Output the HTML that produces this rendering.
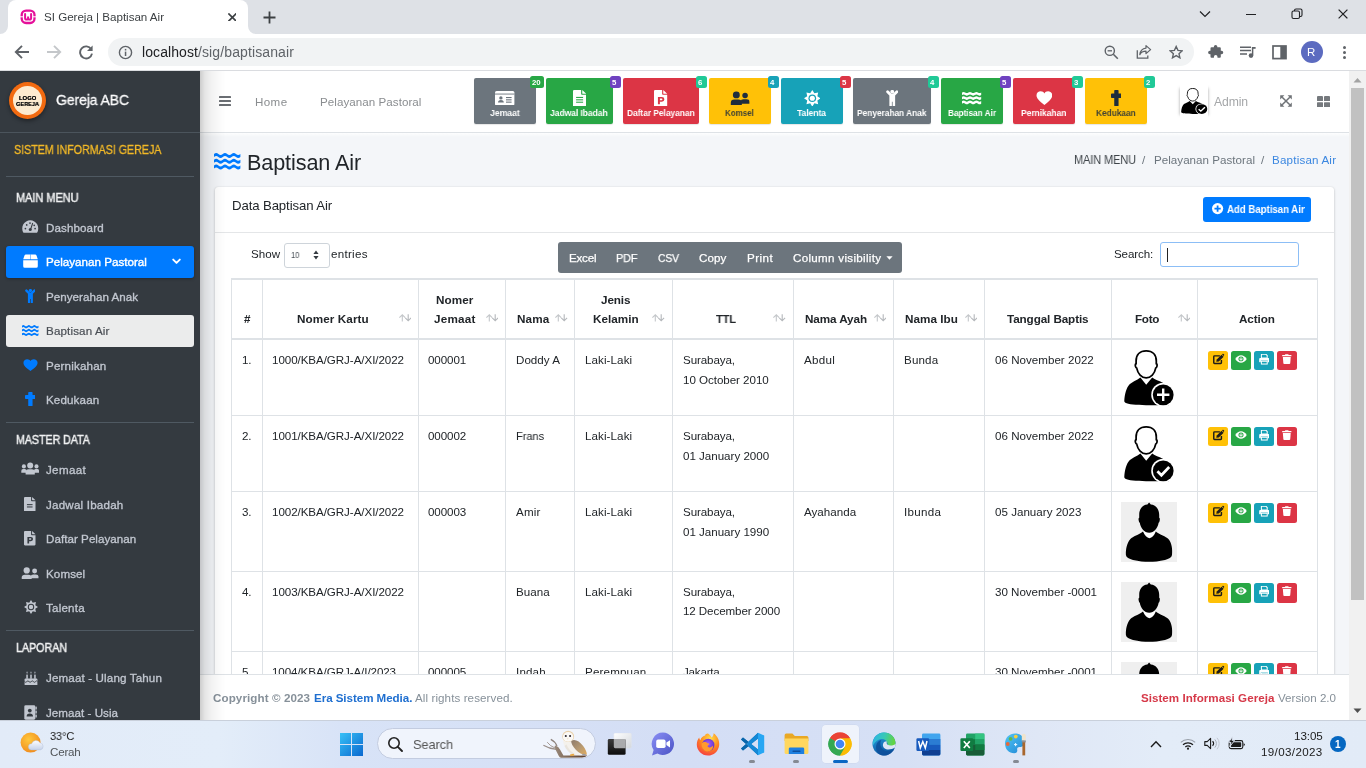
<!DOCTYPE html>
<html lang="en"><head><meta charset="utf-8"><title>SI Gereja | Baptisan Air</title>
<style>
html,body{margin:0;padding:0}
body{width:1366px;height:768px;overflow:hidden;position:relative;background:#fff;font-family:"Liberation Sans",sans-serif}
.t{position:absolute;white-space:pre;display:block;will-change:transform}
</style></head>
<body>
<div style="position:absolute;left:0px;top:0px;width:1366px;height:34px;background:#dee1e6;"></div>
<div style="position:absolute;left:8px;top:0;width:240px;height:34px;background:#fff;border-radius:8px 8px 0 0"></div>
<svg style="position:absolute;left:0px;top:26px;" width="8" height="8" viewBox="0 0 8 8" preserveAspectRatio="none"><path d="M8 8H0A8 8 0 0 0 8 0Z" fill="#fff"/></svg>
<svg style="position:absolute;left:248px;top:26px;" width="8" height="8" viewBox="0 0 8 8" preserveAspectRatio="none"><path d="M0 8H8A8 8 0 0 1 0 0Z" fill="#fff"/></svg>
<div style="position:absolute;left:0px;top:34px;width:1366px;height:36px;background:#fff;"></div>
<div style="position:absolute;left:0px;top:70px;width:1366px;height:1px;background:#dadce0;"></div>
<svg style="position:absolute;left:19px;top:8px;" width="18" height="18" viewBox="0 0 18 18" preserveAspectRatio="none"><rect x="2.7" y="2.6" width="12.8" height="12.4" rx="4.4" fill="#fff" stroke="#e5109a" stroke-width="2.3"/><rect x="1" y="8.3" width="3.4" height="1" fill="#fff"/><rect x="13.8" y="8.3" width="3.4" height="1" fill="#fff"/><path d="M6.1 6V10.2A1.4 1.4 0 0 0 7.5 11.6H7.7A1.4 1.4 0 0 0 9.1 10.2V8.4V10.2A1.4 1.4 0 0 0 10.5 11.6H10.7A1.4 1.4 0 0 0 12.1 10.2V6" fill="none" stroke="#e5109a" stroke-width="2" stroke-linecap="round"/></svg>
<span class="t" style="left:43.60px;top:11.00px;font-size:11.6px;line-height:11.6px;color:#3c4043;letter-spacing:-0.012px;">SI Gereja | Baptisan Air</span>
<svg style="position:absolute;left:227.6px;top:12.6px;" width="8.8" height="8.8" viewBox="0 0 8.8 8.8" preserveAspectRatio="none"><path d="M1 1L7.800000000000001 7.800000000000001M7.800000000000001 1L1 7.800000000000001" stroke="#3c4043" stroke-width="1.7" stroke-linecap="square"/></svg>
<svg style="position:absolute;left:263px;top:10.5px;" width="13" height="13" viewBox="0 0 13 13" preserveAspectRatio="none"><path d="M6.5 0.5V12.5M0.5 6.5H12.5" stroke="#3c4043" stroke-width="1.8"/></svg>
<svg style="position:absolute;left:1199px;top:10px;" width="12" height="8" viewBox="0 0 12 8" preserveAspectRatio="none"><path d="M1 1.5L6 6.5L11 1.5" fill="none" stroke="#202124" stroke-width="1.2"/></svg>
<div style="position:absolute;left:1246px;top:14px;width:10px;height:1px;background:#202124;"></div>
<svg style="position:absolute;left:1291px;top:8px;" width="12" height="12" viewBox="0 0 12 12" preserveAspectRatio="none"><rect x="1" y="3" width="7.5" height="7.5" rx="1.5" fill="none" stroke="#202124" stroke-width="1.1"/><path d="M3.5 3V2.5A1.5 1.5 0 0 1 5 1H9.5A1.5 1.5 0 0 1 11 2.5V7A1.5 1.5 0 0 1 9.5 8.5H9" fill="none" stroke="#202124" stroke-width="1.1"/></svg>
<svg style="position:absolute;left:1338px;top:9px;" width="10" height="10" viewBox="0 0 10 10" preserveAspectRatio="none"><path d="M1 1L9 9M9 1L1 9" stroke="#202124" stroke-width="1.1" stroke-linecap="square"/></svg>
<svg style="position:absolute;left:14px;top:44px;" width="16" height="16" viewBox="0 0 16 16" preserveAspectRatio="none"><g ><path d="M15 8H2.2M8 1.8L1.8 8L8 14.2" fill="none" stroke="#5f6368" stroke-width="1.9" stroke-linejoin="miter"/></g></svg>
<svg style="position:absolute;left:46px;top:44px;" width="16" height="16" viewBox="0 0 16 16" preserveAspectRatio="none"><g transform="translate(16,0) scale(-1,1)"><path d="M15 8H2.2M8 1.8L1.8 8L8 14.2" fill="none" stroke="#c4c7ca" stroke-width="1.9" stroke-linejoin="miter"/></g></svg>
<svg style="position:absolute;left:78px;top:44px;" width="16" height="16" viewBox="0 0 16 16" preserveAspectRatio="none"><path d="M13.2 5.2A6 6 0 1 0 14 9.6" fill="none" stroke="#5f6368" stroke-width="1.9"/><path d="M14.6 1.4V7H9Z" fill="#5f6368"/></svg>
<div style="position:absolute;left:108px;top:38px;width:1086px;height:28px;background:#f1f3f4;border-radius:14px"></div>
<svg style="position:absolute;left:118px;top:45px;" width="15" height="15" viewBox="0 0 15 15" preserveAspectRatio="none"><circle cx="7.5" cy="7.5" r="6.1" fill="none" stroke="#5f6368" stroke-width="1.4"/><rect x="6.8" y="6.6" width="1.5" height="4.4" fill="#5f6368"/><rect x="6.8" y="3.9" width="1.5" height="1.6" fill="#5f6368"/></svg>
<span class="t" style="left:141.60px;top:45.00px;font-size:14px;line-height:14px;color:#202124;letter-spacing:0.082px;">localhost</span>
<span class="t" style="left:197.90px;top:45.00px;font-size:14px;line-height:14px;color:#5f6368;letter-spacing:0.114px;">/sig/baptisanair</span>
<svg style="position:absolute;left:1104px;top:45px;" width="15" height="15" viewBox="0 0 15 15" preserveAspectRatio="none"><circle cx="5.8" cy="5.8" r="4.6" fill="none" stroke="#5f6368" stroke-width="1.4"/><path d="M9.3 9.3L13.8 13.8" stroke="#5f6368" stroke-width="1.6"/><path d="M3.6 5.8H8" stroke="#5f6368" stroke-width="1.3"/></svg>
<svg style="position:absolute;left:1136px;top:44px;" width="16" height="16" viewBox="0 0 16 16" preserveAspectRatio="none"><path d="M1.3 6.2V14.2H11.8V11.6" fill="none" stroke="#5f6368" stroke-width="1.3"/><path d="M10 1.6L14.6 5.6L10 9.6V7.2C7 7.2 5 8.2 3.8 10.6C4.2 7 6.2 4.6 10 4.1Z" fill="none" stroke="#5f6368" stroke-width="1.25" stroke-linejoin="round"/></svg>
<svg style="position:absolute;left:1168.8px;top:44.9px;" width="14.4" height="14.4" viewBox="0 0 16 16" preserveAspectRatio="none"><path d="M8 1.6L9.95 6L14.7 6.45L11.1 9.6L12.15 14.3L8 11.85L3.85 14.3L4.9 9.6L1.3 6.45L6.05 6Z" fill="none" stroke="#5f6368" stroke-width="1.5" stroke-linejoin="miter"/></svg>
<svg style="position:absolute;left:1208px;top:44px;" width="16" height="16" viewBox="0 0 16 16" preserveAspectRatio="none"><path d="M6.3 2.9A1.7 1.7 0 0 1 9.7 2.9V3.6H12.2A1 1 0 0 1 13.2 4.6V7H13.9A1.75 1.75 0 0 1 13.9 10.5H13.2V13A1 1 0 0 1 12.2 14H9.9V13.2A1.8 1.8 0 0 0 6.3 13.2V14H3.9A1 1 0 0 1 2.9 13V10.6H2.3A1.8 1.8 0 0 1 2.3 7H2.9V4.6A1 1 0 0 1 3.9 3.6H6.3Z" fill="#5f6368" transform="translate(-0.4,-0.3)"/></svg>
<svg style="position:absolute;left:1239px;top:44px;" width="18" height="16" viewBox="0 0 18 16" preserveAspectRatio="none"><path d="M1 3.2H12M1 6.6H12M1 10H8" stroke="#5f6368" stroke-width="1.5"/><path d="M13.6 3V11.2" stroke="#5f6368" stroke-width="1.5"/><path d="M13 3H16.6V4.8H13Z" fill="#5f6368"/><circle cx="12" cy="11.6" r="2.3" fill="#5f6368"/></svg>
<svg style="position:absolute;left:1272px;top:44.5px;" width="15" height="15" viewBox="0 0 15 15" preserveAspectRatio="none"><rect x="1" y="1" width="13" height="12.6" fill="none" stroke="#5f6368" stroke-width="1.7"/><rect x="8.3" y="1" width="5.7" height="12.6" fill="#5f6368"/></svg>
<div style="position:absolute;left:1301px;top:41px;width:22px;height:22px;border-radius:11px;background:#5c6bc0"></div>
<span class="t" style="left:1307.44px;top:47.00px;font-size:11.5px;line-height:11.5px;color:#fff;">R</span>
<div style="position:absolute;left:1343px;top:45.5px;width:3px;height:3px;border-radius:2px;background:#5f6368"></div>
<div style="position:absolute;left:1343px;top:50.5px;width:3px;height:3px;border-radius:2px;background:#5f6368"></div>
<div style="position:absolute;left:1343px;top:55.5px;width:3px;height:3px;border-radius:2px;background:#5f6368"></div>
<div style="position:absolute;left:200px;top:133px;width:1149px;height:541px;background:#f4f6f9;"></div>
<svg style="position:absolute;left:213.6px;top:153.2px;overflow:visible;" width="26.4" height="16.6" viewBox="0 0 26.4 16.6" preserveAspectRatio="none"><path d="M0 0.99 Q2.20 -0.99 4.40 0.99 T8.80 0.99 Q11.00 -0.99 13.20 0.99 T17.60 0.99 Q19.80 -0.99 22.00 0.99 T26.40 0.99 L26.40 4.00 Q24.20 5.98 22.00 4.00 T17.60 4.00 Q15.40 5.98 13.20 4.00 T8.80 4.00 Q6.60 5.98 4.40 4.00 T0.00 4.00Z" fill="#007bff"/><path d="M0 6.79 Q2.20 4.82 4.40 6.79 T8.80 6.79 Q11.00 4.82 13.20 6.79 T17.60 6.79 Q19.80 4.82 22.00 6.79 T26.40 6.79 L26.40 9.81 Q24.20 11.78 22.00 9.81 T17.60 9.81 Q15.40 11.78 13.20 9.81 T8.80 9.81 Q6.60 11.78 4.40 9.81 T0.00 9.81Z" fill="#007bff"/><path d="M0 12.60 Q2.20 10.62 4.40 12.60 T8.80 12.60 Q11.00 10.62 13.20 12.60 T17.60 12.60 Q19.80 10.62 22.00 12.60 T26.40 12.60 L26.40 15.61 Q24.20 17.59 22.00 15.61 T17.60 15.61 Q15.40 17.59 13.20 15.61 T8.80 15.61 Q6.60 17.59 4.40 15.61 T0.00 15.61Z" fill="#007bff"/></svg>
<span class="t" style="left:246.60px;top:152.00px;font-size:21.6px;line-height:21.6px;color:#212529;letter-spacing:-0.103px;">Baptisan Air</span>
<span class="t" style="left:1073.60px;top:155.00px;font-size:11.9px;line-height:11.9px;color:#3d4348;letter-spacing:-0.113px;transform:scaleX(0.9250);transform-origin:0 0;">MAIN MENU</span>
<span class="t" style="left:1142.30px;top:154.00px;font-size:11.6px;line-height:11.6px;color:#6c757d;">/</span>
<span class="t" style="left:1153.60px;top:154.00px;font-size:11.6px;line-height:11.6px;color:#6c757d;letter-spacing:0.025px;">Pelayanan Pastoral</span>
<span class="t" style="left:1260.60px;top:154.00px;font-size:11.6px;line-height:11.6px;color:#6c757d;">/</span>
<span class="t" style="left:1272.40px;top:154.00px;font-size:11.6px;line-height:11.6px;color:#3b87e0;letter-spacing:0.194px;">Baptisan Air</span>
<div style="position:absolute;left:215px;top:187px;width:1119px;height:540px;background:#fff;border-radius:3px;box-shadow:0 0 1px rgba(0,0,0,.125),0 1px 3px rgba(0,0,0,.2)"></div>
<div style="position:absolute;left:215px;top:232px;width:1119px;height:1px;background:#e4e6e8;"></div>
<span class="t" style="left:231.60px;top:199.00px;font-size:13.2px;line-height:13.2px;color:#212529;letter-spacing:-0.112px;">Data Baptisan Air</span>
<div style="position:absolute;left:1203px;top:197px;width:108px;height:25px;border-radius:3px;background:#007bff"></div>
<svg style="position:absolute;left:1212.4px;top:203.4px;" width="11.2" height="11.2" viewBox="0 0 100 100" preserveAspectRatio="none"><circle cx="50" cy="50" r="50" fill="#fff"/><path d="M42 22H58V42H78V58H58V78H42V58H22V42H42Z" fill="#007bff"/></svg>
<span class="t" style="left:1226.60px;top:205.00px;font-size:10.3px;line-height:10.3px;color:#fff;font-weight:700;letter-spacing:-0.078px;transform:scaleX(0.9462);transform-origin:0 0;font-stretch:condensed;">Add Baptisan Air</span>
<span class="t" style="left:250.60px;top:248.00px;font-size:11.6px;line-height:11.6px;color:#212529;">Show</span>
<div style="position:absolute;left:283.5px;top:242.5px;width:44px;height:23px;border:1px solid #ced4da;border-radius:3px;background:#fff"></div>
<span class="t" style="left:290.60px;top:251.00px;font-size:8.4px;line-height:8.4px;color:#495057;letter-spacing:-0.070px;transform:scaleX(0.9142);transform-origin:0 0;">10</span>
<svg style="position:absolute;left:313px;top:249.6px;" width="6" height="10" viewBox="0 0 6 10" preserveAspectRatio="none"><path d="M0.4 4L3 0.6L5.6 4Z M0.4 6L3 9.4L5.6 6Z" fill="#343a40"/></svg>
<span class="t" style="left:331.20px;top:248.00px;font-size:11.6px;line-height:11.6px;color:#212529;letter-spacing:0.284px;">entries</span>
<div style="position:absolute;left:558px;top:242px;width:344px;height:30.5px;border-radius:3px;background:#6c757d"></div>
<span class="t" style="left:568.80px;top:252.00px;font-size:11.6px;line-height:11.6px;color:#fff;letter-spacing:-0.212px;-webkit-text-stroke:.25px #fff;">Excel</span>
<span class="t" style="left:616.10px;top:252.00px;font-size:11.6px;line-height:11.6px;color:#fff;letter-spacing:-0.116px;transform:scaleX(0.9413);transform-origin:0 0;-webkit-text-stroke:.25px #fff;">PDF</span>
<span class="t" style="left:657.80px;top:252.00px;font-size:11.6px;line-height:11.6px;color:#fff;letter-spacing:-0.119px;transform:scaleX(0.8941);transform-origin:0 0;-webkit-text-stroke:.25px #fff;">CSV</span>
<span class="t" style="left:698.60px;top:252.00px;font-size:11.6px;line-height:11.6px;color:#fff;letter-spacing:0.105px;-webkit-text-stroke:.25px #fff;">Copy</span>
<span class="t" style="left:746.60px;top:252.00px;font-size:11.6px;line-height:11.6px;color:#fff;letter-spacing:0.471px;-webkit-text-stroke:.25px #fff;">Print</span>
<span class="t" style="left:793.30px;top:252.00px;font-size:11.6px;line-height:11.6px;color:#fff;letter-spacing:0.305px;-webkit-text-stroke:.25px #fff;">Column visibility</span>
<svg style="position:absolute;left:886px;top:255.5px;" width="7" height="4" viewBox="0 0 7 4" preserveAspectRatio="none"><path d="M0.4 0.3H6.6L3.5 3.7Z" fill="#fff"/></svg>
<span class="t" style="left:1114.30px;top:248.00px;font-size:11.6px;line-height:11.6px;color:#212529;letter-spacing:-0.110px;">Search:</span>
<div style="position:absolute;left:1160px;top:242px;width:137px;height:23px;border:1px solid #8cbef6;border-radius:3px;background:#fff"></div>
<div style="position:absolute;left:1167px;top:248px;width:1px;height:14px;background:#222;"></div>
<div style="position:absolute;left:231.8px;top:278px;width:1085.2px;height:2px;background:#dee2e6;"></div>
<div style="position:absolute;left:231.8px;top:338px;width:1085.2px;height:2px;background:#dee2e6;"></div>
<div style="position:absolute;left:231.8px;top:415px;width:1085.2px;height:1px;background:#dee2e6;"></div>
<div style="position:absolute;left:231.8px;top:491px;width:1085.2px;height:1px;background:#dee2e6;"></div>
<div style="position:absolute;left:231.8px;top:571px;width:1085.2px;height:1px;background:#dee2e6;"></div>
<div style="position:absolute;left:231.8px;top:651px;width:1085.2px;height:1px;background:#dee2e6;"></div>
<div style="position:absolute;left:231.3px;top:278px;width:1px;height:396px;background:#dee2e6;"></div>
<div style="position:absolute;left:262.0px;top:278px;width:1px;height:396px;background:#dee2e6;"></div>
<div style="position:absolute;left:418.0px;top:278px;width:1px;height:396px;background:#dee2e6;"></div>
<div style="position:absolute;left:505.0px;top:278px;width:1px;height:396px;background:#dee2e6;"></div>
<div style="position:absolute;left:574.0px;top:278px;width:1px;height:396px;background:#dee2e6;"></div>
<div style="position:absolute;left:672.0px;top:278px;width:1px;height:396px;background:#dee2e6;"></div>
<div style="position:absolute;left:793.0px;top:278px;width:1px;height:396px;background:#dee2e6;"></div>
<div style="position:absolute;left:893.0px;top:278px;width:1px;height:396px;background:#dee2e6;"></div>
<div style="position:absolute;left:984.0px;top:278px;width:1px;height:396px;background:#dee2e6;"></div>
<div style="position:absolute;left:1111.0px;top:278px;width:1px;height:396px;background:#dee2e6;"></div>
<div style="position:absolute;left:1197.0px;top:278px;width:1px;height:396px;background:#dee2e6;"></div>
<div style="position:absolute;left:1316.5px;top:278px;width:1px;height:396px;background:#dee2e6;"></div>
<span class="t" style="left:243.60px;top:313.00px;font-size:11.7px;line-height:11.7px;color:#212529;font-weight:700;letter-spacing:-0.116px;">#</span>
<span class="t" style="left:297.20px;top:313.00px;font-size:11.7px;line-height:11.7px;color:#212529;font-weight:700;letter-spacing:0.091px;">Nomer Kartu</span>
<span class="t" style="left:436.20px;top:294.00px;font-size:11.7px;line-height:11.7px;color:#212529;font-weight:700;letter-spacing:0.074px;">Nomer</span>
<span class="t" style="left:434.00px;top:313.00px;font-size:11.7px;line-height:11.7px;color:#212529;font-weight:700;letter-spacing:0.217px;">Jemaat</span>
<span class="t" style="left:516.80px;top:313.00px;font-size:11.7px;line-height:11.7px;color:#212529;font-weight:700;letter-spacing:0.114px;">Nama</span>
<span class="t" style="left:601.40px;top:294.00px;font-size:11.7px;line-height:11.7px;color:#212529;font-weight:700;letter-spacing:-0.098px;">Jenis</span>
<span class="t" style="left:593.30px;top:313.00px;font-size:11.7px;line-height:11.7px;color:#212529;font-weight:700;letter-spacing:0.019px;">Kelamin</span>
<span class="t" style="left:715.60px;top:313.00px;font-size:11.7px;line-height:11.7px;color:#212529;font-weight:700;letter-spacing:-0.107px;transform:scaleX(0.9478);transform-origin:0 0;">TTL</span>
<span class="t" style="left:805.30px;top:313.00px;font-size:11.7px;line-height:11.7px;color:#212529;font-weight:700;letter-spacing:-0.089px;">Nama Ayah</span>
<span class="t" style="left:905.10px;top:313.00px;font-size:11.7px;line-height:11.7px;color:#212529;font-weight:700;letter-spacing:0.049px;">Nama Ibu</span>
<span class="t" style="left:1007.00px;top:313.00px;font-size:11.7px;line-height:11.7px;color:#212529;font-weight:700;letter-spacing:-0.100px;">Tanggal Baptis</span>
<span class="t" style="left:1135.10px;top:313.00px;font-size:11.7px;line-height:11.7px;color:#212529;font-weight:700;letter-spacing:-0.278px;">Foto</span>
<span class="t" style="left:1239.10px;top:313.00px;font-size:11.7px;line-height:11.7px;color:#212529;font-weight:700;letter-spacing:-0.093px;">Action</span>
<svg style="position:absolute;left:398.6px;top:314.0px;" width="12.6" height="7.6" viewBox="0 0 12.6 7.6" preserveAspectRatio="none"><path d="M3.3 7.4V1.2M0.4 3.7L3.3 0.8L6.2 3.7" fill="none" stroke="#c4c7ca" stroke-width="1.1"/><path d="M9.2 0.2V6.4M6.3 3.9L9.2 6.8L12.1 3.9" fill="none" stroke="#b4b7bb" stroke-width="1.1"/></svg>
<svg style="position:absolute;left:485.6px;top:314.0px;" width="12.6" height="7.6" viewBox="0 0 12.6 7.6" preserveAspectRatio="none"><path d="M3.3 7.4V1.2M0.4 3.7L3.3 0.8L6.2 3.7" fill="none" stroke="#c4c7ca" stroke-width="1.1"/><path d="M9.2 0.2V6.4M6.3 3.9L9.2 6.8L12.1 3.9" fill="none" stroke="#b4b7bb" stroke-width="1.1"/></svg>
<svg style="position:absolute;left:555.2px;top:314.0px;" width="12.6" height="7.6" viewBox="0 0 12.6 7.6" preserveAspectRatio="none"><path d="M3.3 7.4V1.2M0.4 3.7L3.3 0.8L6.2 3.7" fill="none" stroke="#c4c7ca" stroke-width="1.1"/><path d="M9.2 0.2V6.4M6.3 3.9L9.2 6.8L12.1 3.9" fill="none" stroke="#b4b7bb" stroke-width="1.1"/></svg>
<svg style="position:absolute;left:652.2px;top:314.0px;" width="12.6" height="7.6" viewBox="0 0 12.6 7.6" preserveAspectRatio="none"><path d="M3.3 7.4V1.2M0.4 3.7L3.3 0.8L6.2 3.7" fill="none" stroke="#c4c7ca" stroke-width="1.1"/><path d="M9.2 0.2V6.4M6.3 3.9L9.2 6.8L12.1 3.9" fill="none" stroke="#b4b7bb" stroke-width="1.1"/></svg>
<svg style="position:absolute;left:773.2px;top:314.0px;" width="12.6" height="7.6" viewBox="0 0 12.6 7.6" preserveAspectRatio="none"><path d="M3.3 7.4V1.2M0.4 3.7L3.3 0.8L6.2 3.7" fill="none" stroke="#c4c7ca" stroke-width="1.1"/><path d="M9.2 0.2V6.4M6.3 3.9L9.2 6.8L12.1 3.9" fill="none" stroke="#b4b7bb" stroke-width="1.1"/></svg>
<svg style="position:absolute;left:873.6px;top:314.0px;" width="12.6" height="7.6" viewBox="0 0 12.6 7.6" preserveAspectRatio="none"><path d="M3.3 7.4V1.2M0.4 3.7L3.3 0.8L6.2 3.7" fill="none" stroke="#c4c7ca" stroke-width="1.1"/><path d="M9.2 0.2V6.4M6.3 3.9L9.2 6.8L12.1 3.9" fill="none" stroke="#b4b7bb" stroke-width="1.1"/></svg>
<svg style="position:absolute;left:964.6px;top:314.0px;" width="12.6" height="7.6" viewBox="0 0 12.6 7.6" preserveAspectRatio="none"><path d="M3.3 7.4V1.2M0.4 3.7L3.3 0.8L6.2 3.7" fill="none" stroke="#c4c7ca" stroke-width="1.1"/><path d="M9.2 0.2V6.4M6.3 3.9L9.2 6.8L12.1 3.9" fill="none" stroke="#b4b7bb" stroke-width="1.1"/></svg>
<svg style="position:absolute;left:1177.5px;top:314.0px;" width="12.6" height="7.6" viewBox="0 0 12.6 7.6" preserveAspectRatio="none"><path d="M3.3 7.4V1.2M0.4 3.7L3.3 0.8L6.2 3.7" fill="none" stroke="#c4c7ca" stroke-width="1.1"/><path d="M9.2 0.2V6.4M6.3 3.9L9.2 6.8L12.1 3.9" fill="none" stroke="#b4b7bb" stroke-width="1.1"/></svg>
<div style="position:absolute;left:200px;top:133px;width:1149px;height:541px;overflow:hidden"><div style="position:absolute;left:-200px;top:-133px">
<span class="t" style="left:241.60px;top:354.00px;font-size:11.6px;line-height:11.6px;color:#212529;letter-spacing:-0.086px;">1.</span>
<span class="t" style="left:272.40px;top:354.00px;font-size:11.6px;line-height:11.6px;color:#212529;letter-spacing:-0.064px;">1000/KBA/GRJ-A/XI/2022</span>
<span class="t" style="left:428.40px;top:354.00px;font-size:11.6px;line-height:11.6px;color:#212529;letter-spacing:-0.081px;">000001</span>
<span class="t" style="left:516.10px;top:354.00px;font-size:11.6px;line-height:11.6px;color:#212529;letter-spacing:0.025px;">Doddy A</span>
<span class="t" style="left:585.30px;top:354.00px;font-size:11.6px;line-height:11.6px;color:#212529;letter-spacing:0.088px;">Laki-Laki</span>
<span class="t" style="left:683.00px;top:354.00px;font-size:11.6px;line-height:11.6px;color:#212529;letter-spacing:-0.095px;">Surabaya,</span>
<span class="t" style="left:683.00px;top:374.00px;font-size:11.6px;line-height:11.6px;color:#212529;letter-spacing:-0.045px;">10 October 2010</span>
<span class="t" style="left:803.60px;top:354.00px;font-size:11.6px;line-height:11.6px;color:#212529;letter-spacing:0.309px;">Abdul</span>
<span class="t" style="left:903.90px;top:354.00px;font-size:11.6px;line-height:11.6px;color:#212529;letter-spacing:0.154px;">Bunda</span>
<span class="t" style="left:994.60px;top:354.00px;font-size:11.6px;line-height:11.6px;color:#212529;letter-spacing:0.012px;">06 November 2022</span>
<svg style="position:absolute;left:1124px;top:350px;" width="51" height="57" viewBox="0 0 51 57" preserveAspectRatio="none"><path d="M0.3 50.6C0.7 44 2.4 37.6 5.6 34.2C8 31.8 12.8 30.4 16.4 27.4L22.2 34.8L28.2 27.4C31 29.6 35 30.8 38.4 32.4C42 34 44 38 45 42V55.2H22C12 55.2 4 54.2 1.4 52.8C0.5 52.2 0.2 51.6 0.3 50.6Z" fill="#000"/><path d="M22.2 0.9C28.6 0.9 32.3 5 32.3 11V13.7C33.1 13.9 33.3 15 32.9 16.4C32.7 17.4 32.3 18 31.7 18.2C30.7 23.6 26.8 27.8 22.2 27.8C17.6 27.8 13.7 23.6 12.7 18.2C12.1 18 11.7 17.4 11.5 16.4C11.1 15 11.3 13.9 12.1 13.7V11C12.1 5 15.8 0.9 22.2 0.9Z" fill="#fff" stroke="#000" stroke-width="1.75"/><circle cx="39.2" cy="44.8" r="12" fill="#fff"/><circle cx="39.2" cy="44.8" r="10.4" fill="#000"/><path d="M39.2 38.6V51M33 44.8H45.4" stroke="#fff" stroke-width="2.4"/></svg>
<div style="position:absolute;left:1208px;top:351px;width:20px;height:19px;border-radius:2.5px;background:#ffc107"></div>
<svg style="position:absolute;left:1212.5px;top:354.3px;overflow:visible;" width="11.0" height="10.0" viewBox="0 0 11.5 10.6" preserveAspectRatio="none"><path d="M7.2 2H1.6Q0.8 2 0.8 2.8V9.2Q0.8 10 1.6 10H8Q8.8 10 8.8 9.2V6.4" fill="none" stroke="#1d1c1a" stroke-width="1.5"/><path d="M3.4 8.1L3.9 5.7L8.9 0.7L11.1 2.9L6.1 7.9Z" fill="#1d1c1a"/><path d="M9.5 0.5L10.2 -0.2Q10.6 -0.5 11 -0.1L11.6 0.5Q12 0.9 11.6 1.3L11 2Z" fill="#1d1c1a"/></svg>
<div style="position:absolute;left:1231px;top:351px;width:20px;height:19px;border-radius:2.5px;background:#28a745"></div>
<svg style="position:absolute;left:1235.0px;top:355.3px;" width="12" height="8" viewBox="0 0 13 9" preserveAspectRatio="none"><path d="M0.3 4.5Q3 0.3 6.5 0.3Q10 0.3 12.7 4.5Q10 8.7 6.5 8.7Q3 8.7 0.3 4.5Z" fill="#fff"/><circle cx="6.5" cy="4.4" r="2.75" fill="#28a745"/><circle cx="6.5" cy="4.4" r="1.75" fill="#fff" opacity=".82"/><path d="M6.5 2.6V4.4" stroke="#28a745" stroke-width=".8"/></svg>
<div style="position:absolute;left:1254px;top:351px;width:20px;height:19px;border-radius:2.5px;background:#17a2b8"></div>
<svg style="position:absolute;left:1258.6px;top:354.2px;" width="10.6" height="10.6" viewBox="0 0 11.6 11.4" preserveAspectRatio="none"><path d="M2.6 0.3H7.6L9 1.7V4.2H2.6Z" fill="none" stroke="#fff" stroke-width="1.1"/><path d="M1.3 4.4H10.3Q11.4 4.4 11.4 5.5V8.4Q11.4 8.9 10.9 8.9H9.6V7H2V8.9H0.7Q0.2 8.9 0.2 8.4V5.5Q0.2 4.4 1.3 4.4Z" fill="#fff"/><rect x="2.6" y="7.8" width="6.4" height="3" fill="none" stroke="#fff" stroke-width="1.1"/></svg>
<div style="position:absolute;left:1277px;top:351px;width:20px;height:19px;border-radius:2.5px;background:#dc3545"></div>
<svg style="position:absolute;left:1282.2px;top:354.2px;" width="9.6" height="10.4" viewBox="0 0 10 11.6" preserveAspectRatio="none"><path d="M0.2 1.2H3L3.5 0.3H6.5L7 1.2H9.8V2.5H0.2Z" fill="#fff"/><path d="M0.9 3.3H9.1L8.6 10.4Q8.5 11.3 7.6 11.3H2.4Q1.5 11.3 1.4 10.4Z" fill="#fff"/></svg>
<span class="t" style="left:241.60px;top:430.00px;font-size:11.6px;line-height:11.6px;color:#212529;letter-spacing:-0.086px;">2.</span>
<span class="t" style="left:272.40px;top:430.00px;font-size:11.6px;line-height:11.6px;color:#212529;letter-spacing:-0.064px;">1001/KBA/GRJ-A/XI/2022</span>
<span class="t" style="left:428.40px;top:430.00px;font-size:11.6px;line-height:11.6px;color:#212529;letter-spacing:-0.081px;">000002</span>
<span class="t" style="left:516.10px;top:430.00px;font-size:11.6px;line-height:11.6px;color:#212529;letter-spacing:-0.089px;transform:scaleX(0.9625);transform-origin:0 0;">Frans</span>
<span class="t" style="left:585.30px;top:430.00px;font-size:11.6px;line-height:11.6px;color:#212529;letter-spacing:0.088px;">Laki-Laki</span>
<span class="t" style="left:683.00px;top:430.00px;font-size:11.6px;line-height:11.6px;color:#212529;letter-spacing:-0.095px;">Surabaya,</span>
<span class="t" style="left:683.00px;top:450.00px;font-size:11.6px;line-height:11.6px;color:#212529;letter-spacing:-0.019px;">01 January 2000</span>
<span class="t" style="left:994.60px;top:430.00px;font-size:11.6px;line-height:11.6px;color:#212529;letter-spacing:0.012px;">06 November 2022</span>
<svg style="position:absolute;left:1124px;top:426px;" width="51" height="57" viewBox="0 0 51 57" preserveAspectRatio="none"><path d="M0.3 50.6C0.7 44 2.4 37.6 5.6 34.2C8 31.8 12.8 30.4 16.4 27.4L22.2 34.8L28.2 27.4C31 29.6 35 30.8 38.4 32.4C42 34 44 38 45 42V55.2H22C12 55.2 4 54.2 1.4 52.8C0.5 52.2 0.2 51.6 0.3 50.6Z" fill="#000"/><path d="M22.2 0.9C28.6 0.9 32.3 5 32.3 11V13.7C33.1 13.9 33.3 15 32.9 16.4C32.7 17.4 32.3 18 31.7 18.2C30.7 23.6 26.8 27.8 22.2 27.8C17.6 27.8 13.7 23.6 12.7 18.2C12.1 18 11.7 17.4 11.5 16.4C11.1 15 11.3 13.9 12.1 13.7V11C12.1 5 15.8 0.9 22.2 0.9Z" fill="#fff" stroke="#000" stroke-width="1.75"/><circle cx="39.2" cy="44.8" r="12" fill="#fff"/><circle cx="39.2" cy="44.8" r="10.4" fill="#000"/><path d="M33.4 45.2L37.4 49.2L45.2 41" fill="none" stroke="#fff" stroke-width="2.7"/></svg>
<div style="position:absolute;left:1208px;top:427px;width:20px;height:19px;border-radius:2.5px;background:#ffc107"></div>
<svg style="position:absolute;left:1212.5px;top:430.3px;overflow:visible;" width="11.0" height="10.0" viewBox="0 0 11.5 10.6" preserveAspectRatio="none"><path d="M7.2 2H1.6Q0.8 2 0.8 2.8V9.2Q0.8 10 1.6 10H8Q8.8 10 8.8 9.2V6.4" fill="none" stroke="#1d1c1a" stroke-width="1.5"/><path d="M3.4 8.1L3.9 5.7L8.9 0.7L11.1 2.9L6.1 7.9Z" fill="#1d1c1a"/><path d="M9.5 0.5L10.2 -0.2Q10.6 -0.5 11 -0.1L11.6 0.5Q12 0.9 11.6 1.3L11 2Z" fill="#1d1c1a"/></svg>
<div style="position:absolute;left:1231px;top:427px;width:20px;height:19px;border-radius:2.5px;background:#28a745"></div>
<svg style="position:absolute;left:1235.0px;top:431.3px;" width="12" height="8" viewBox="0 0 13 9" preserveAspectRatio="none"><path d="M0.3 4.5Q3 0.3 6.5 0.3Q10 0.3 12.7 4.5Q10 8.7 6.5 8.7Q3 8.7 0.3 4.5Z" fill="#fff"/><circle cx="6.5" cy="4.4" r="2.75" fill="#28a745"/><circle cx="6.5" cy="4.4" r="1.75" fill="#fff" opacity=".82"/><path d="M6.5 2.6V4.4" stroke="#28a745" stroke-width=".8"/></svg>
<div style="position:absolute;left:1254px;top:427px;width:20px;height:19px;border-radius:2.5px;background:#17a2b8"></div>
<svg style="position:absolute;left:1258.6px;top:430.2px;" width="10.6" height="10.6" viewBox="0 0 11.6 11.4" preserveAspectRatio="none"><path d="M2.6 0.3H7.6L9 1.7V4.2H2.6Z" fill="none" stroke="#fff" stroke-width="1.1"/><path d="M1.3 4.4H10.3Q11.4 4.4 11.4 5.5V8.4Q11.4 8.9 10.9 8.9H9.6V7H2V8.9H0.7Q0.2 8.9 0.2 8.4V5.5Q0.2 4.4 1.3 4.4Z" fill="#fff"/><rect x="2.6" y="7.8" width="6.4" height="3" fill="none" stroke="#fff" stroke-width="1.1"/></svg>
<div style="position:absolute;left:1277px;top:427px;width:20px;height:19px;border-radius:2.5px;background:#dc3545"></div>
<svg style="position:absolute;left:1282.2px;top:430.2px;" width="9.6" height="10.4" viewBox="0 0 10 11.6" preserveAspectRatio="none"><path d="M0.2 1.2H3L3.5 0.3H6.5L7 1.2H9.8V2.5H0.2Z" fill="#fff"/><path d="M0.9 3.3H9.1L8.6 10.4Q8.5 11.3 7.6 11.3H2.4Q1.5 11.3 1.4 10.4Z" fill="#fff"/></svg>
<span class="t" style="left:241.60px;top:506.00px;font-size:11.6px;line-height:11.6px;color:#212529;letter-spacing:-0.086px;">3.</span>
<span class="t" style="left:272.40px;top:506.00px;font-size:11.6px;line-height:11.6px;color:#212529;letter-spacing:-0.064px;">1002/KBA/GRJ-A/XI/2022</span>
<span class="t" style="left:428.40px;top:506.00px;font-size:11.6px;line-height:11.6px;color:#212529;letter-spacing:-0.081px;">000003</span>
<span class="t" style="left:516.10px;top:506.00px;font-size:11.6px;line-height:11.6px;color:#212529;letter-spacing:0.193px;">Amir</span>
<span class="t" style="left:585.30px;top:506.00px;font-size:11.6px;line-height:11.6px;color:#212529;letter-spacing:0.088px;">Laki-Laki</span>
<span class="t" style="left:683.00px;top:506.00px;font-size:11.6px;line-height:11.6px;color:#212529;letter-spacing:-0.095px;">Surabaya,</span>
<span class="t" style="left:683.00px;top:526.00px;font-size:11.6px;line-height:11.6px;color:#212529;letter-spacing:-0.019px;">01 January 1990</span>
<span class="t" style="left:803.60px;top:506.00px;font-size:11.6px;line-height:11.6px;color:#212529;letter-spacing:0.023px;">Ayahanda</span>
<span class="t" style="left:903.90px;top:506.00px;font-size:11.6px;line-height:11.6px;color:#212529;letter-spacing:0.322px;">Ibunda</span>
<span class="t" style="left:994.60px;top:506.00px;font-size:11.6px;line-height:11.6px;color:#212529;letter-spacing:0.007px;">05 January 2023</span>
<svg style="position:absolute;left:1121px;top:501.6px;" width="56" height="60" viewBox="0 0 56 60" preserveAspectRatio="none"><rect x="0" y="0" width="56" height="60" fill="#efefef"/><ellipse cx="28.3" cy="32.4" rx="7.8" ry="4.6" fill="#fff"/><path d="M4.9 53C4.6 47 6 41 9.4 37C12 34.4 17.6 33 22 29.6C23.8 33.6 26 36 28.4 36.2C31 36 33.2 33.6 34.8 29.6C39.2 33 44.8 34.4 47.4 37C50.8 41 51.6 47 51 53C50.6 55.6 48 57 44 57.9C38 59.2 33 59.7 28.2 59.7C23 59.7 18 59.2 12 57.9C8 57 5.3 55.6 4.9 53Z" fill="#000"/><path d="M28.1 0.4L29.8 2.6C35 3 38.2 7.4 38.2 12.8V15.8C38.9 16 39 17.2 38.7 18.6C38.5 19.8 38.2 20.6 37.6 20.8C36.8 26 33 30.8 28.2 30.8C23.4 30.8 19.6 26 18.8 20.8C18.2 20.6 17.9 19.8 17.7 18.6C17.4 17.2 17.5 16 18.2 15.8V12.8C18.2 7.4 21.2 3 26.4 2.6Z" fill="#000"/></svg>
<div style="position:absolute;left:1208px;top:503px;width:20px;height:19.5px;border-radius:2.5px;background:#ffc107"></div>
<svg style="position:absolute;left:1212.5px;top:506.3px;overflow:visible;" width="11.0" height="10.0" viewBox="0 0 11.5 10.6" preserveAspectRatio="none"><path d="M7.2 2H1.6Q0.8 2 0.8 2.8V9.2Q0.8 10 1.6 10H8Q8.8 10 8.8 9.2V6.4" fill="none" stroke="#1d1c1a" stroke-width="1.5"/><path d="M3.4 8.1L3.9 5.7L8.9 0.7L11.1 2.9L6.1 7.9Z" fill="#1d1c1a"/><path d="M9.5 0.5L10.2 -0.2Q10.6 -0.5 11 -0.1L11.6 0.5Q12 0.9 11.6 1.3L11 2Z" fill="#1d1c1a"/></svg>
<div style="position:absolute;left:1231px;top:503px;width:20px;height:19.5px;border-radius:2.5px;background:#28a745"></div>
<svg style="position:absolute;left:1235.0px;top:507.3px;" width="12" height="8" viewBox="0 0 13 9" preserveAspectRatio="none"><path d="M0.3 4.5Q3 0.3 6.5 0.3Q10 0.3 12.7 4.5Q10 8.7 6.5 8.7Q3 8.7 0.3 4.5Z" fill="#fff"/><circle cx="6.5" cy="4.4" r="2.75" fill="#28a745"/><circle cx="6.5" cy="4.4" r="1.75" fill="#fff" opacity=".82"/><path d="M6.5 2.6V4.4" stroke="#28a745" stroke-width=".8"/></svg>
<div style="position:absolute;left:1254px;top:503px;width:20px;height:19.5px;border-radius:2.5px;background:#17a2b8"></div>
<svg style="position:absolute;left:1258.6px;top:506.2px;" width="10.6" height="10.6" viewBox="0 0 11.6 11.4" preserveAspectRatio="none"><path d="M2.6 0.3H7.6L9 1.7V4.2H2.6Z" fill="none" stroke="#fff" stroke-width="1.1"/><path d="M1.3 4.4H10.3Q11.4 4.4 11.4 5.5V8.4Q11.4 8.9 10.9 8.9H9.6V7H2V8.9H0.7Q0.2 8.9 0.2 8.4V5.5Q0.2 4.4 1.3 4.4Z" fill="#fff"/><rect x="2.6" y="7.8" width="6.4" height="3" fill="none" stroke="#fff" stroke-width="1.1"/></svg>
<div style="position:absolute;left:1277px;top:503px;width:20px;height:19.5px;border-radius:2.5px;background:#dc3545"></div>
<svg style="position:absolute;left:1282.2px;top:506.2px;" width="9.6" height="10.4" viewBox="0 0 10 11.6" preserveAspectRatio="none"><path d="M0.2 1.2H3L3.5 0.3H6.5L7 1.2H9.8V2.5H0.2Z" fill="#fff"/><path d="M0.9 3.3H9.1L8.6 10.4Q8.5 11.3 7.6 11.3H2.4Q1.5 11.3 1.4 10.4Z" fill="#fff"/></svg>
<span class="t" style="left:241.60px;top:586.00px;font-size:11.6px;line-height:11.6px;color:#212529;letter-spacing:-0.086px;">4.</span>
<span class="t" style="left:272.40px;top:586.00px;font-size:11.6px;line-height:11.6px;color:#212529;letter-spacing:-0.064px;">1003/KBA/GRJ-A/XI/2022</span>
<span class="t" style="left:516.10px;top:586.00px;font-size:11.6px;line-height:11.6px;color:#212529;letter-spacing:0.014px;">Buana</span>
<span class="t" style="left:585.30px;top:586.00px;font-size:11.6px;line-height:11.6px;color:#212529;letter-spacing:0.088px;">Laki-Laki</span>
<span class="t" style="left:683.00px;top:586.00px;font-size:11.6px;line-height:11.6px;color:#212529;letter-spacing:-0.095px;">Surabaya,</span>
<span class="t" style="left:683.00px;top:605.00px;font-size:11.6px;line-height:11.6px;color:#212529;letter-spacing:-0.101px;">12 December 2000</span>
<span class="t" style="left:994.60px;top:586.00px;font-size:11.6px;line-height:11.6px;color:#212529;letter-spacing:-0.028px;">30 November -0001</span>
<svg style="position:absolute;left:1121px;top:581.6px;" width="56" height="60" viewBox="0 0 56 60" preserveAspectRatio="none"><rect x="0" y="0" width="56" height="60" fill="#efefef"/><ellipse cx="28.3" cy="32.4" rx="7.8" ry="4.6" fill="#fff"/><path d="M4.9 53C4.6 47 6 41 9.4 37C12 34.4 17.6 33 22 29.6C23.8 33.6 26 36 28.4 36.2C31 36 33.2 33.6 34.8 29.6C39.2 33 44.8 34.4 47.4 37C50.8 41 51.6 47 51 53C50.6 55.6 48 57 44 57.9C38 59.2 33 59.7 28.2 59.7C23 59.7 18 59.2 12 57.9C8 57 5.3 55.6 4.9 53Z" fill="#000"/><path d="M28.1 0.4L29.8 2.6C35 3 38.2 7.4 38.2 12.8V15.8C38.9 16 39 17.2 38.7 18.6C38.5 19.8 38.2 20.6 37.6 20.8C36.8 26 33 30.8 28.2 30.8C23.4 30.8 19.6 26 18.8 20.8C18.2 20.6 17.9 19.8 17.7 18.6C17.4 17.2 17.5 16 18.2 15.8V12.8C18.2 7.4 21.2 3 26.4 2.6Z" fill="#000"/></svg>
<div style="position:absolute;left:1208px;top:583px;width:20px;height:19.5px;border-radius:2.5px;background:#ffc107"></div>
<svg style="position:absolute;left:1212.5px;top:586.3px;overflow:visible;" width="11.0" height="10.0" viewBox="0 0 11.5 10.6" preserveAspectRatio="none"><path d="M7.2 2H1.6Q0.8 2 0.8 2.8V9.2Q0.8 10 1.6 10H8Q8.8 10 8.8 9.2V6.4" fill="none" stroke="#1d1c1a" stroke-width="1.5"/><path d="M3.4 8.1L3.9 5.7L8.9 0.7L11.1 2.9L6.1 7.9Z" fill="#1d1c1a"/><path d="M9.5 0.5L10.2 -0.2Q10.6 -0.5 11 -0.1L11.6 0.5Q12 0.9 11.6 1.3L11 2Z" fill="#1d1c1a"/></svg>
<div style="position:absolute;left:1231px;top:583px;width:20px;height:19.5px;border-radius:2.5px;background:#28a745"></div>
<svg style="position:absolute;left:1235.0px;top:587.3px;" width="12" height="8" viewBox="0 0 13 9" preserveAspectRatio="none"><path d="M0.3 4.5Q3 0.3 6.5 0.3Q10 0.3 12.7 4.5Q10 8.7 6.5 8.7Q3 8.7 0.3 4.5Z" fill="#fff"/><circle cx="6.5" cy="4.4" r="2.75" fill="#28a745"/><circle cx="6.5" cy="4.4" r="1.75" fill="#fff" opacity=".82"/><path d="M6.5 2.6V4.4" stroke="#28a745" stroke-width=".8"/></svg>
<div style="position:absolute;left:1254px;top:583px;width:20px;height:19.5px;border-radius:2.5px;background:#17a2b8"></div>
<svg style="position:absolute;left:1258.6px;top:586.2px;" width="10.6" height="10.6" viewBox="0 0 11.6 11.4" preserveAspectRatio="none"><path d="M2.6 0.3H7.6L9 1.7V4.2H2.6Z" fill="none" stroke="#fff" stroke-width="1.1"/><path d="M1.3 4.4H10.3Q11.4 4.4 11.4 5.5V8.4Q11.4 8.9 10.9 8.9H9.6V7H2V8.9H0.7Q0.2 8.9 0.2 8.4V5.5Q0.2 4.4 1.3 4.4Z" fill="#fff"/><rect x="2.6" y="7.8" width="6.4" height="3" fill="none" stroke="#fff" stroke-width="1.1"/></svg>
<div style="position:absolute;left:1277px;top:583px;width:20px;height:19.5px;border-radius:2.5px;background:#dc3545"></div>
<svg style="position:absolute;left:1282.2px;top:586.2px;" width="9.6" height="10.4" viewBox="0 0 10 11.6" preserveAspectRatio="none"><path d="M0.2 1.2H3L3.5 0.3H6.5L7 1.2H9.8V2.5H0.2Z" fill="#fff"/><path d="M0.9 3.3H9.1L8.6 10.4Q8.5 11.3 7.6 11.3H2.4Q1.5 11.3 1.4 10.4Z" fill="#fff"/></svg>
<span class="t" style="left:241.60px;top:666.00px;font-size:11.6px;line-height:11.6px;color:#212529;letter-spacing:-0.086px;">5.</span>
<span class="t" style="left:272.40px;top:666.00px;font-size:11.6px;line-height:11.6px;color:#212529;letter-spacing:-0.080px;">1004/KBA/GRJ-A/I/2023</span>
<span class="t" style="left:428.40px;top:666.00px;font-size:11.6px;line-height:11.6px;color:#212529;letter-spacing:-0.081px;">000005</span>
<span class="t" style="left:516.10px;top:666.00px;font-size:11.6px;line-height:11.6px;color:#212529;letter-spacing:0.157px;">Indah</span>
<span class="t" style="left:585.30px;top:666.00px;font-size:11.6px;line-height:11.6px;color:#212529;letter-spacing:0.161px;">Perempuan</span>
<span class="t" style="left:683.00px;top:666.00px;font-size:11.6px;line-height:11.6px;color:#212529;letter-spacing:-0.206px;">Jakarta,</span>
<span class="t" style="left:994.60px;top:666.00px;font-size:11.6px;line-height:11.6px;color:#212529;letter-spacing:-0.028px;">30 November -0001</span>
<svg style="position:absolute;left:1121px;top:661.6px;" width="56" height="60" viewBox="0 0 56 60" preserveAspectRatio="none"><rect x="0" y="0" width="56" height="60" fill="#efefef"/><ellipse cx="28.3" cy="32.4" rx="7.8" ry="4.6" fill="#fff"/><path d="M4.9 53C4.6 47 6 41 9.4 37C12 34.4 17.6 33 22 29.6C23.8 33.6 26 36 28.4 36.2C31 36 33.2 33.6 34.8 29.6C39.2 33 44.8 34.4 47.4 37C50.8 41 51.6 47 51 53C50.6 55.6 48 57 44 57.9C38 59.2 33 59.7 28.2 59.7C23 59.7 18 59.2 12 57.9C8 57 5.3 55.6 4.9 53Z" fill="#000"/><path d="M28.1 0.4L29.8 2.6C35 3 38.2 7.4 38.2 12.8V15.8C38.9 16 39 17.2 38.7 18.6C38.5 19.8 38.2 20.6 37.6 20.8C36.8 26 33 30.8 28.2 30.8C23.4 30.8 19.6 26 18.8 20.8C18.2 20.6 17.9 19.8 17.7 18.6C17.4 17.2 17.5 16 18.2 15.8V12.8C18.2 7.4 21.2 3 26.4 2.6Z" fill="#000"/></svg>
<div style="position:absolute;left:1208px;top:663px;width:20px;height:19.5px;border-radius:2.5px;background:#ffc107"></div>
<svg style="position:absolute;left:1212.5px;top:666.3px;overflow:visible;" width="11.0" height="10.0" viewBox="0 0 11.5 10.6" preserveAspectRatio="none"><path d="M7.2 2H1.6Q0.8 2 0.8 2.8V9.2Q0.8 10 1.6 10H8Q8.8 10 8.8 9.2V6.4" fill="none" stroke="#1d1c1a" stroke-width="1.5"/><path d="M3.4 8.1L3.9 5.7L8.9 0.7L11.1 2.9L6.1 7.9Z" fill="#1d1c1a"/><path d="M9.5 0.5L10.2 -0.2Q10.6 -0.5 11 -0.1L11.6 0.5Q12 0.9 11.6 1.3L11 2Z" fill="#1d1c1a"/></svg>
<div style="position:absolute;left:1231px;top:663px;width:20px;height:19.5px;border-radius:2.5px;background:#28a745"></div>
<svg style="position:absolute;left:1235.0px;top:667.3px;" width="12" height="8" viewBox="0 0 13 9" preserveAspectRatio="none"><path d="M0.3 4.5Q3 0.3 6.5 0.3Q10 0.3 12.7 4.5Q10 8.7 6.5 8.7Q3 8.7 0.3 4.5Z" fill="#fff"/><circle cx="6.5" cy="4.4" r="2.75" fill="#28a745"/><circle cx="6.5" cy="4.4" r="1.75" fill="#fff" opacity=".82"/><path d="M6.5 2.6V4.4" stroke="#28a745" stroke-width=".8"/></svg>
<div style="position:absolute;left:1254px;top:663px;width:20px;height:19.5px;border-radius:2.5px;background:#17a2b8"></div>
<svg style="position:absolute;left:1258.6px;top:666.2px;" width="10.6" height="10.6" viewBox="0 0 11.6 11.4" preserveAspectRatio="none"><path d="M2.6 0.3H7.6L9 1.7V4.2H2.6Z" fill="none" stroke="#fff" stroke-width="1.1"/><path d="M1.3 4.4H10.3Q11.4 4.4 11.4 5.5V8.4Q11.4 8.9 10.9 8.9H9.6V7H2V8.9H0.7Q0.2 8.9 0.2 8.4V5.5Q0.2 4.4 1.3 4.4Z" fill="#fff"/><rect x="2.6" y="7.8" width="6.4" height="3" fill="none" stroke="#fff" stroke-width="1.1"/></svg>
<div style="position:absolute;left:1277px;top:663px;width:20px;height:19.5px;border-radius:2.5px;background:#dc3545"></div>
<svg style="position:absolute;left:1282.2px;top:666.2px;" width="9.6" height="10.4" viewBox="0 0 10 11.6" preserveAspectRatio="none"><path d="M0.2 1.2H3L3.5 0.3H6.5L7 1.2H9.8V2.5H0.2Z" fill="#fff"/><path d="M0.9 3.3H9.1L8.6 10.4Q8.5 11.3 7.6 11.3H2.4Q1.5 11.3 1.4 10.4Z" fill="#fff"/></svg>
</div></div>
<div style="position:absolute;left:200px;top:71px;width:1149px;height:61px;background:#fff;"></div>
<div style="position:absolute;left:200px;top:132px;width:1149px;height:1px;background:#dee2e6;"></div>
<div style="position:absolute;left:200px;top:133px;width:1149px;height:4px;background:linear-gradient(180deg,rgba(255,255,255,.85),rgba(255,255,255,0))"></div>
<div style="position:absolute;left:219px;top:96.2px;width:12px;height:1.9px;background:#6a6e73;border-radius:.6px;"></div>
<div style="position:absolute;left:219px;top:100.2px;width:12px;height:1.9px;background:#6a6e73;border-radius:.6px;"></div>
<div style="position:absolute;left:219px;top:104.2px;width:12px;height:1.9px;background:#6a6e73;border-radius:.6px;"></div>
<span class="t" style="left:255.30px;top:96.00px;font-size:11.6px;line-height:11.6px;color:#8a8d90;letter-spacing:0.391px;">Home</span>
<span class="t" style="left:319.90px;top:96.00px;font-size:11.6px;line-height:11.6px;color:#8a8d90;letter-spacing:0.053px;">Pelayanan Pastoral</span>
<div style="position:absolute;left:474px;top:78px;width:62px;height:46px;border-radius:2px;background:#6c757d;box-shadow:0 1px 1px rgba(0,0,0,.10)"></div>
<span class="t" style="left:489.76px;top:108.00px;font-size:9.5px;line-height:9.5px;color:#fff;font-weight:700;letter-spacing:-0.082px;transform:scaleX(0.9176);transform-origin:0 0;">Jemaat</span>
<svg style="position:absolute;left:495.3px;top:90.7px;" width="19.4" height="14.6" viewBox="0 0 19.4 14.6" preserveAspectRatio="none"><rect x="0" y="0" width="19.4" height="14.6" rx="1.6" fill="#fff"/><rect x="0" y="2.6" width="19.4" height=".9" fill="#6c757d"/><circle cx="5.9" cy="6.9" r="1.7" fill="#6c757d"/><path d="M3 11.4Q3 8.9 5.9 8.9Q8.8 8.9 8.8 11.4Z" fill="#6c757d"/><rect x="11" y="6" width="5.6" height="1.1" fill="#6c757d"/><rect x="11" y="8.3" width="5.6" height="1.1" fill="#6c757d"/><rect x="11" y="10.6" width="5.6" height="1.1" fill="#6c757d"/></svg>
<div style="position:absolute;left:530px;top:76.4px;width:14px;height:11.2px;border-radius:2.5px;background:#28a745"></div>
<span class="t" style="left:532.26px;top:79.00px;font-size:7.8px;line-height:7.8px;color:#fff;font-weight:700;">20</span>
<div style="position:absolute;left:546px;top:78px;width:67px;height:46px;border-radius:2px;background:#28a745;box-shadow:0 1px 1px rgba(0,0,0,.10)"></div>
<span class="t" style="left:550.27px;top:108.00px;font-size:9.5px;line-height:9.5px;color:#fff;font-weight:700;letter-spacing:-0.075px;transform:scaleX(0.9005);transform-origin:0 0;">Jadwal Ibadah</span>
<svg style="position:absolute;left:572.9px;top:89.7px;" width="13.2" height="16.6" viewBox="0 0 94 125" preserveAspectRatio="none"><path d="M8 0H58V30Q58 36 64 36H94V118Q94 125 86 125H8Q0 125 0 118V8Q0 0 8 0Z" fill="#fff"/><path d="M66 0L94 28H70Q66 28 66 24Z" fill="#fff"/><rect x="22" y="52" width="50" height="8" fill="#28a745"/><rect x="22" y="70" width="50" height="8" fill="#28a745"/><rect x="22" y="88" width="50" height="8" fill="#28a745"/></svg>
<div style="position:absolute;left:609.5px;top:76.4px;width:11px;height:11.2px;border-radius:2.5px;background:#6f42c1"></div>
<span class="t" style="left:612.43px;top:79.00px;font-size:7.8px;line-height:7.8px;color:#fff;font-weight:700;">5</span>
<div style="position:absolute;left:623px;top:78px;width:76px;height:46px;border-radius:2px;background:#dc3545;box-shadow:0 1px 1px rgba(0,0,0,.10)"></div>
<span class="t" style="left:626.77px;top:108.00px;font-size:9.5px;line-height:9.5px;color:#fff;font-weight:700;letter-spacing:-0.072px;transform:scaleX(0.8902);transform-origin:0 0;">Daftar Pelayanan</span>
<svg style="position:absolute;left:654.4px;top:89.7px;" width="13.2" height="16.6" viewBox="0 0 94 125" preserveAspectRatio="none"><path d="M8 0H58V30Q58 36 64 36H94V118Q94 125 86 125H8Q0 125 0 118V8Q0 0 8 0Z" fill="#fff"/><path d="M66 0L94 28H70Q66 28 66 24Z" fill="#fff"/><path d="M28 52H56Q74 52 74 70Q74 88 56 88H42V108H28Z M42 64V77H54Q60 77 60 70.5Q60 64 54 64Z" fill="#dc3545" fill-rule="evenodd"/></svg>
<div style="position:absolute;left:695.5px;top:76.4px;width:11px;height:11.2px;border-radius:2.5px;background:#20c997"></div>
<span class="t" style="left:698.43px;top:79.00px;font-size:7.8px;line-height:7.8px;color:#fff;font-weight:700;">6</span>
<div style="position:absolute;left:709px;top:78px;width:62px;height:46px;border-radius:2px;background:#ffc107;box-shadow:0 1px 1px rgba(0,0,0,.10)"></div>
<span class="t" style="left:725.16px;top:108.00px;font-size:9.5px;line-height:9.5px;color:#1f2d3d;font-weight:700;letter-spacing:-0.086px;transform:scaleX(0.8517);transform-origin:0 0;opacity:.86;">Komsel</span>
<svg style="position:absolute;left:729.8px;top:90.9px;" width="20.4" height="14.3" viewBox="0 0 100 70" preserveAspectRatio="none"><circle cx="31" cy="19" r="17" fill="#1f2d3d"/><path d="M4 70V57.400000000000006Q4 42 21.55 42H40.45Q58 42 58 57.400000000000006V70Z" fill="#1f2d3d"/><circle cx="74" cy="22" r="13.5" fill="#1f2d3d"/><path d="M53 62V52.55Q53 41 66.65 41H81.35Q95 41 95 52.55V62Z" fill="#1f2d3d"/></svg>
<div style="position:absolute;left:767.5px;top:76.4px;width:11px;height:11.2px;border-radius:2.5px;background:#17a2b8"></div>
<span class="t" style="left:770.43px;top:79.00px;font-size:7.8px;line-height:7.8px;color:#fff;font-weight:700;">4</span>
<div style="position:absolute;left:781px;top:78px;width:62px;height:46px;border-radius:2px;background:#17a2b8;box-shadow:0 1px 1px rgba(0,0,0,.10)"></div>
<span class="t" style="left:797.07px;top:108.00px;font-size:9.5px;line-height:9.5px;color:#fff;font-weight:700;letter-spacing:-0.070px;transform:scaleX(0.9042);transform-origin:0 0;">Talenta</span>
<svg style="position:absolute;left:803.7px;top:89.7px;" width="16.6" height="16.6" viewBox="0 0 100 100" preserveAspectRatio="none"><polygon points="50.0,0.0 62.6,19.5 85.4,14.6 80.5,37.4 100.0,50.0 80.5,62.6 85.4,85.4 62.6,80.5 50.0,100.0 37.4,80.5 14.6,85.4 19.5,62.6 0.0,50.0 19.5,37.4 14.6,14.6 37.4,19.5" fill="#fff"/><circle cx="50" cy="50" r="23" fill="#17a2b8"/><circle cx="50" cy="50" r="15.5" fill="#fff"/></svg>
<div style="position:absolute;left:839.5px;top:76.4px;width:11px;height:11.2px;border-radius:2.5px;background:#dc3545"></div>
<span class="t" style="left:842.43px;top:79.00px;font-size:7.8px;line-height:7.8px;color:#fff;font-weight:700;">5</span>
<div style="position:absolute;left:853px;top:78px;width:78px;height:46px;border-radius:2px;background:#6c757d;box-shadow:0 1px 1px rgba(0,0,0,.10)"></div>
<span class="t" style="left:856.86px;top:108.00px;font-size:9.5px;line-height:9.5px;color:#fff;font-weight:700;letter-spacing:-0.079px;transform:scaleX(0.8875);transform-origin:0 0;">Penyerahan Anak</span>
<svg style="position:absolute;left:885.7px;top:89.7px;" width="12.528" height="16.704" viewBox="0 0 100 134" preserveAspectRatio="none"><circle cx="50" cy="15" r="15.5" fill="#fff"/><path d="M5 7Q-3 15 5 23L27 45V124Q27 134 37 134Q47 134 47 124V94H53V124Q53 134 63 134Q73 134 73 124V45L95 23Q103 15 95 7Q87 -1 79 7L54 33H46L21 7Q13 -1 5 7Z" fill="#fff"/></svg>
<div style="position:absolute;left:927.5px;top:76.4px;width:11px;height:11.2px;border-radius:2.5px;background:#20c997"></div>
<span class="t" style="left:930.43px;top:79.00px;font-size:7.8px;line-height:7.8px;color:#fff;font-weight:700;">4</span>
<div style="position:absolute;left:941px;top:78px;width:62px;height:46px;border-radius:2px;background:#28a745;box-shadow:0 1px 1px rgba(0,0,0,.10)"></div>
<span class="t" style="left:947.57px;top:108.00px;font-size:9.5px;line-height:9.5px;color:#fff;font-weight:700;letter-spacing:-0.070px;transform:scaleX(0.8763);transform-origin:0 0;">Baptisan Air</span>
<svg style="position:absolute;left:962.4px;top:92.0px;overflow:visible;" width="19.2" height="12.2" viewBox="0 0 19.2 12.2" preserveAspectRatio="none"><path d="M0 0.55 Q1.60 -0.55 3.20 0.55 T6.40 0.55 Q8.00 -0.55 9.60 0.55 T12.80 0.55 Q14.40 -0.55 16.00 0.55 T19.20 0.55 L19.20 3.11 Q17.60 4.22 16.00 3.11 T12.80 3.11 Q11.20 4.22 9.60 3.11 T6.40 3.11 Q4.80 4.22 3.20 3.11 T0.00 3.11Z" fill="#fff"/><path d="M0 4.82 Q1.60 3.71 3.20 4.82 T6.40 4.82 Q8.00 3.71 9.60 4.82 T12.80 4.82 Q14.40 3.71 16.00 4.82 T19.20 4.82 L19.20 7.38 Q17.60 8.49 16.00 7.38 T12.80 7.38 Q11.20 8.49 9.60 7.38 T6.40 7.38 Q4.80 8.49 3.20 7.38 T0.00 7.38Z" fill="#fff"/><path d="M0 9.09 Q1.60 7.98 3.20 9.09 T6.40 9.09 Q8.00 7.98 9.60 9.09 T12.80 9.09 Q14.40 7.98 16.00 9.09 T19.20 9.09 L19.20 11.65 Q17.60 12.75 16.00 11.65 T12.80 11.65 Q11.20 12.75 9.60 11.65 T6.40 11.65 Q4.80 12.75 3.20 11.65 T0.00 11.65Z" fill="#fff"/></svg>
<div style="position:absolute;left:999.5px;top:76.4px;width:11px;height:11.2px;border-radius:2.5px;background:#6f42c1"></div>
<span class="t" style="left:1002.43px;top:79.00px;font-size:7.8px;line-height:7.8px;color:#fff;font-weight:700;">5</span>
<div style="position:absolute;left:1013px;top:78px;width:62px;height:46px;border-radius:2px;background:#dc3545;box-shadow:0 1px 1px rgba(0,0,0,.10)"></div>
<span class="t" style="left:1020.87px;top:108.00px;font-size:9.5px;line-height:9.5px;color:#fff;font-weight:700;letter-spacing:-0.077px;transform:scaleX(0.8999);transform-origin:0 0;">Pernikahan</span>
<svg style="position:absolute;left:1035.6px;top:91.1px;" width="16.8" height="14.2" viewBox="0 0 100 94" preserveAspectRatio="none"><path d="M50 92C20 66 3 50 3 28C3 12 15 2 28 2C38 2 46 8 50 16C54 8 62 2 72 2C85 2 97 12 97 28C97 50 80 66 50 92Z" fill="#fff"/></svg>
<div style="position:absolute;left:1071.5px;top:76.4px;width:11px;height:11.2px;border-radius:2.5px;background:#20c997"></div>
<span class="t" style="left:1074.43px;top:79.00px;font-size:7.8px;line-height:7.8px;color:#fff;font-weight:700;">3</span>
<div style="position:absolute;left:1085px;top:78px;width:62px;height:46px;border-radius:2px;background:#ffc107;box-shadow:0 1px 1px rgba(0,0,0,.10)"></div>
<span class="t" style="left:1095.76px;top:108.00px;font-size:9.5px;line-height:9.5px;color:#1f2d3d;font-weight:700;letter-spacing:-0.085px;transform:scaleX(0.8854);transform-origin:0 0;opacity:.86;">Kedukaan</span>
<svg style="position:absolute;left:1110.6px;top:89.8px;" width="10.8" height="16.2" viewBox="0 0 100 130" preserveAspectRatio="none"><path d="M30 6Q30 0 36 0H64Q70 0 70 6V28H92Q100 28 100 34V58Q100 64 92 64H70V124Q70 130 64 130H36Q30 130 30 124V64H8Q0 64 0 58V34Q0 28 8 28H30Z" fill="#1f2d3d"/></svg>
<div style="position:absolute;left:1143.5px;top:76.4px;width:11px;height:11.2px;border-radius:2.5px;background:#20c997"></div>
<span class="t" style="left:1146.43px;top:79.00px;font-size:7.8px;line-height:7.8px;color:#fff;font-weight:700;">2</span>
<div style="position:absolute;left:1179.5px;top:88px;width:28px;height:27px;background:#fff;box-shadow:0 0 3px rgba(0,0,0,.35)"></div><div style="position:absolute;left:1179.5px;top:84px;width:28px;height:4px;background:#fff;"></div><div style="position:absolute;left:1179.5px;top:115px;width:28px;height:4px;background:#fff;"></div><svg style="position:absolute;left:1180.6px;top:88.2px;" width="27" height="26.8" viewBox="0 0 51 57" preserveAspectRatio="none"><path d="M0.3 50.6C0.7 44 2.4 37.6 5.6 34.2C8 31.8 12.8 30.4 16.4 27.4L22.2 34.8L28.2 27.4C31 29.6 35 30.8 38.4 32.4C42 34 44 38 45 42V55.2H22C12 55.2 4 54.2 1.4 52.8C0.5 52.2 0.2 51.6 0.3 50.6Z" fill="#000"/><path d="M22.2 0.9C28.6 0.9 32.3 5 32.3 11V13.7C33.1 13.9 33.3 15 32.9 16.4C32.7 17.4 32.3 18 31.7 18.2C30.7 23.6 26.8 27.8 22.2 27.8C17.6 27.8 13.7 23.6 12.7 18.2C12.1 18 11.7 17.4 11.5 16.4C11.1 15 11.3 13.9 12.1 13.7V11C12.1 5 15.8 0.9 22.2 0.9Z" fill="#fff" stroke="#000" stroke-width="1.75"/><circle cx="39.2" cy="44.8" r="12" fill="#fff"/><circle cx="39.2" cy="44.8" r="10.4" fill="#000"/><path d="M33.4 45.2L37.4 49.2L45.2 41" fill="none" stroke="#fff" stroke-width="2.7"/></svg>
<span class="t" style="left:1213.60px;top:96.00px;font-size:12.2px;line-height:12.2px;color:#a5a7a9;letter-spacing:-0.109px;">Admin</span>
<svg style="position:absolute;left:1280px;top:95.3px;" width="12" height="12" viewBox="0 0 12 12" preserveAspectRatio="none"><path d="M2.2 2.2L9.8 9.8M9.8 2.2L2.2 9.8" stroke="#6e7276" stroke-width="1.5"/><path d="M0.2 0.2H4.4L0.2 4.4Z M11.8 0.2V4.4L7.6 0.2Z M0.2 11.8V7.6L4.4 11.8Z M11.8 11.8H7.6L11.8 7.6Z" fill="#6e7276"/></svg>
<svg style="position:absolute;left:1317px;top:95.6px;" width="13" height="11.4" viewBox="0 0 13 11.4" preserveAspectRatio="none"><rect x="0" y="0" width="6" height="5.1" rx=".5" fill="#75797d"/><rect x="7" y="0" width="6" height="5.1" rx=".5" fill="#75797d"/><rect x="0" y="6.3" width="6" height="5.1" rx=".5" fill="#75797d"/><rect x="7" y="6.3" width="6" height="5.1" rx=".5" fill="#75797d"/></svg>
<div style="position:absolute;left:200px;top:674px;width:1149px;height:46px;background:#fff;"></div>
<div style="position:absolute;left:200px;top:674px;width:1149px;height:1px;background:#dee2e6;"></div>
<span class="t" style="left:212.80px;top:692.00px;font-size:11.6px;line-height:11.6px;color:#869099;font-weight:700;letter-spacing:0.098px;">Copyright &copy; 2023</span>
<span class="t" style="left:313.60px;top:692.00px;font-size:11.6px;line-height:11.6px;color:#1f6fd0;font-weight:700;letter-spacing:-0.055px;">Era Sistem Media.</span>
<span class="t" style="left:415.40px;top:692.00px;font-size:11.6px;line-height:11.6px;color:#869099;letter-spacing:0.089px;">All rights reserved.</span>
<span class="t" style="left:1141.20px;top:692.00px;font-size:11.6px;line-height:11.6px;color:#d63848;font-weight:700;letter-spacing:0.028px;">Sistem Informasi Gereja</span>
<span class="t" style="left:1278.10px;top:692.00px;font-size:11.6px;line-height:11.6px;color:#869099;">Version 2.0</span>
<div style="position:absolute;left:200px;top:71px;width:26px;height:649px;background:linear-gradient(90deg,rgba(0,0,0,.20) 0%,rgba(0,0,0,.105) 18%,rgba(0,0,0,.05) 45%,rgba(0,0,0,.015) 78%,rgba(0,0,0,0) 100%)"></div>
<div style="position:absolute;left:0px;top:71px;width:200px;height:649px;background:#343a40;"></div>
<div style="position:absolute;left:0px;top:132px;width:200px;height:1px;background:#4b545c;"></div>
<div style="position:absolute;left:9px;top:82px;width:37px;height:37px;border-radius:19px;background:#f26a10;box-shadow:0 2px 4px rgba(0,0,0,.4)"></div>
<div style="position:absolute;left:13px;top:86px;width:29px;height:29px;border-radius:15px;background:#fdebd0"></div>
<span class="t" style="left:18.51px;top:96.00px;font-size:5.9px;line-height:5.9px;color:#111;font-weight:700;letter-spacing:0.010px;text-shadow:0 0 .3px #111;">LOGO</span>
<span class="t" style="left:15.67px;top:102.00px;font-size:5.9px;line-height:5.9px;color:#111;font-weight:700;letter-spacing:-0.061px;transform:scaleX(0.9635);transform-origin:0 0;text-shadow:0 0 .3px #111;">GEREJA</span>
<span class="t" style="left:56.10px;top:93.00px;font-size:14.6px;line-height:14.6px;color:#fbfbfc;letter-spacing:-0.116px;transform:scaleX(0.9617);transform-origin:0 0;-webkit-text-stroke:.3px #fbfbfc;">Gereja ABC</span>
<span class="t" style="left:13.90px;top:144.00px;font-size:12.6px;line-height:12.6px;color:#f3b927;letter-spacing:-0.114px;transform:scaleX(0.8583);transform-origin:0 0;-webkit-text-stroke:.3px #f3b927;">SISTEM INFORMASI GEREJA</span>
<div style="position:absolute;left:6px;top:176px;width:188px;height:1px;background:#4f5962;"></div>
<span class="t" style="left:15.90px;top:193.00px;font-size:11.9px;line-height:11.9px;color:#f1f2f3;letter-spacing:-0.113px;transform:scaleX(0.9325);transform-origin:0 0;-webkit-text-stroke:.42px #f1f2f3;">MAIN MENU</span>
<svg style="position:absolute;left:22px;top:220px;" width="16.5" height="13" viewBox="0 0 16.5 13" preserveAspectRatio="none"><path d="M8.25 0.3A8.1 8.1 0 0 0 1.3 12.4Q1.5 12.8 2 12.8H14.5Q15 12.8 15.2 12.4A8.1 8.1 0 0 0 8.25 0.3Z" fill="#c2c7d0"/><circle cx="8.25" cy="9.6" r="1.5" fill="#343a40"/><path d="M8.6 9.4L10.6 3.4" stroke="#343a40" stroke-width="1.1" stroke-linecap="round"/><circle cx="3.4" cy="8.6" r="0.85" fill="#343a40"/><circle cx="4.7" cy="4.9" r="0.85" fill="#343a40"/><circle cx="8.0" cy="3.1" r="0.85" fill="#343a40"/><circle cx="12.2" cy="5.3" r="0.85" fill="#343a40"/><circle cx="13.1" cy="8.6" r="0.85" fill="#343a40"/></svg>
<span class="t" style="left:46.00px;top:222.00px;font-size:11.6px;line-height:11.6px;color:#c2c7d0;letter-spacing:0.109px;-webkit-text-stroke:.32px #c2c7d0;">Dashboard</span>
<div style="position:absolute;left:6px;top:246px;width:188px;height:32px;border-radius:3px;background:#007bff;box-shadow:0 1px 3px rgba(0,0,0,.3)"></div>
<svg style="position:absolute;left:22.5px;top:254px;" width="15" height="14" viewBox="0 0 15 14" preserveAspectRatio="none"><path d="M2.8 0.4H7.1V5.2H0.2L1.6 1.2Q1.9 0.4 2.8 0.4Z M7.9 0.4H12.2Q13.1 0.4 13.4 1.2L14.8 5.2H7.9Z M0.2 6.2H14.8V12.2Q14.8 13.7 13.3 13.7H1.7Q0.2 13.7 0.2 12.2Z" fill="#fff"/><rect x="7.1" y="0.4" width=".8" height="4.8" fill="#fff" opacity=".55"/></svg>
<span class="t" style="left:46.00px;top:256.00px;font-size:11.6px;line-height:11.6px;color:#fff;letter-spacing:0.020px;-webkit-text-stroke:.4px #fff;">Pelayanan Pastoral</span>
<svg style="position:absolute;left:172px;top:257.5px;" width="9" height="7" viewBox="0 0 9 7" preserveAspectRatio="none"><path d="M1.2 1.6L4.5 4.9L7.8 1.6" fill="none" stroke="#fff" stroke-width="1.9" stroke-linecap="round" stroke-linejoin="round"/></svg>
<svg style="position:absolute;left:24.5px;top:288.5px;" width="10.8" height="14.4" viewBox="0 0 100 134" preserveAspectRatio="none"><circle cx="50" cy="15" r="15.5" fill="#007bff"/><path d="M5 7Q-3 15 5 23L27 45V124Q27 134 37 134Q47 134 47 124V94H53V124Q53 134 63 134Q73 134 73 124V45L95 23Q103 15 95 7Q87 -1 79 7L54 33H46L21 7Q13 -1 5 7Z" fill="#007bff"/></svg>
<span class="t" style="left:46.00px;top:291.00px;font-size:11.6px;line-height:11.6px;color:#c2c7d0;letter-spacing:0.044px;-webkit-text-stroke:.32px #c2c7d0;">Penyerahan Anak</span>
<div style="position:absolute;left:6px;top:315px;width:188px;height:32px;border-radius:3px;background:#ebecec"></div>
<svg style="position:absolute;left:22px;top:324.5px;overflow:visible;" width="16.5" height="11" viewBox="0 0 16.5 11" preserveAspectRatio="none"><path d="M0 0.65 Q1.38 -0.65 2.75 0.65 T5.50 0.65 Q6.88 -0.65 8.25 0.65 T11.00 0.65 Q12.38 -0.65 13.75 0.65 T16.50 0.65 L16.50 2.65 Q15.12 3.96 13.75 2.65 T11.00 2.65 Q9.62 3.96 8.25 2.65 T5.50 2.65 Q4.12 3.96 2.75 2.65 T0.00 2.65Z" fill="#007bff"/><path d="M0 4.50 Q1.38 3.19 2.75 4.50 T5.50 4.50 Q6.88 3.19 8.25 4.50 T11.00 4.50 Q12.38 3.19 13.75 4.50 T16.50 4.50 L16.50 6.50 Q15.12 7.81 13.75 6.50 T11.00 6.50 Q9.62 7.81 8.25 6.50 T5.50 6.50 Q4.12 7.81 2.75 6.50 T0.00 6.50Z" fill="#007bff"/><path d="M0 8.35 Q1.38 7.04 2.75 8.35 T5.50 8.35 Q6.88 7.04 8.25 8.35 T11.00 8.35 Q12.38 7.04 13.75 8.35 T16.50 8.35 L16.50 10.35 Q15.12 11.65 13.75 10.35 T11.00 10.35 Q9.62 11.65 8.25 10.35 T5.50 10.35 Q4.12 11.65 2.75 10.35 T0.00 10.35Z" fill="#007bff"/></svg>
<span class="t" style="left:46.00px;top:325.00px;font-size:11.6px;line-height:11.6px;color:#494e54;letter-spacing:0.144px;-webkit-text-stroke:.2px #494e54;">Baptisan Air</span>
<svg style="position:absolute;left:22.5px;top:359.3px;" width="15" height="12.2" viewBox="0 0 100 94" preserveAspectRatio="none"><path d="M50 92C20 66 3 50 3 28C3 12 15 2 28 2C38 2 46 8 50 16C54 8 62 2 72 2C85 2 97 12 97 28C97 50 80 66 50 92Z" fill="#007bff"/></svg>
<span class="t" style="left:46.00px;top:360.00px;font-size:11.6px;line-height:11.6px;color:#c2c7d0;letter-spacing:0.184px;-webkit-text-stroke:.32px #c2c7d0;">Pernikahan</span>
<svg style="position:absolute;left:24.6px;top:392px;" width="10.8" height="14.2" viewBox="0 0 100 130" preserveAspectRatio="none"><path d="M30 6Q30 0 36 0H64Q70 0 70 6V28H92Q100 28 100 34V58Q100 64 92 64H70V124Q70 130 64 130H36Q30 130 30 124V64H8Q0 64 0 58V34Q0 28 8 28H30Z" fill="#007bff"/></svg>
<span class="t" style="left:46.00px;top:394.00px;font-size:11.6px;line-height:11.6px;color:#c2c7d0;letter-spacing:0.135px;-webkit-text-stroke:.32px #c2c7d0;">Kedukaan</span>
<div style="position:absolute;left:6px;top:422px;width:188px;height:1px;background:#4f5962;"></div>
<span class="t" style="left:15.90px;top:435.00px;font-size:11.9px;line-height:11.9px;color:#f1f2f3;letter-spacing:-0.113px;transform:scaleX(0.9047);transform-origin:0 0;-webkit-text-stroke:.42px #f1f2f3;">MASTER DATA</span>
<svg style="position:absolute;left:20.8px;top:462.3px;" width="18.4" height="13" viewBox="0 0 18.4 13" preserveAspectRatio="none"><circle cx="9.2" cy="3.4" r="3.0" fill="#c2c7d0"/><path d="M4.6 12.6V10.17Q4.6 7.2 7.59 7.2H10.809999999999999Q13.799999999999999 7.2 13.799999999999999 10.17V12.6Z" fill="#c2c7d0"/><circle cx="2.9" cy="4.4" r="2.05" fill="#c2c7d0"/><path d="M0.2999999999999998 10.8V9.09Q0.2999999999999998 7.0 1.99 7.0H3.8099999999999996Q5.5 7.0 5.5 9.09V10.8Z" fill="#c2c7d0"/><circle cx="15.5" cy="4.4" r="2.05" fill="#c2c7d0"/><path d="M12.9 10.8V9.09Q12.9 7.0 14.59 7.0H16.41Q18.1 7.0 18.1 9.09V10.8Z" fill="#c2c7d0"/></svg>
<span class="t" style="left:46.00px;top:464.00px;font-size:11.6px;line-height:11.6px;color:#c2c7d0;letter-spacing:0.328px;-webkit-text-stroke:.32px #c2c7d0;">Jemaat</span>
<svg style="position:absolute;left:24.4px;top:496.7px;" width="11.5" height="14.4" viewBox="0 0 94 125" preserveAspectRatio="none"><path d="M8 0H58V30Q58 36 64 36H94V118Q94 125 86 125H8Q0 125 0 118V8Q0 0 8 0Z" fill="#c2c7d0"/><path d="M66 0L94 28H70Q66 28 66 24Z" fill="#c2c7d0"/><rect x="24" y="62" width="46" height="9" fill="#343a40"/><rect x="24" y="82" width="46" height="9" fill="#343a40"/></svg>
<span class="t" style="left:46.00px;top:499.00px;font-size:11.6px;line-height:11.6px;color:#c2c7d0;letter-spacing:0.209px;-webkit-text-stroke:.32px #c2c7d0;">Jadwal Ibadah</span>
<svg style="position:absolute;left:24.4px;top:531.2px;" width="11.5" height="14.4" viewBox="0 0 94 125" preserveAspectRatio="none"><path d="M8 0H58V30Q58 36 64 36H94V118Q94 125 86 125H8Q0 125 0 118V8Q0 0 8 0Z" fill="#c2c7d0"/><path d="M66 0L94 28H70Q66 28 66 24Z" fill="#c2c7d0"/><path d="M28 52H56Q74 52 74 70Q74 88 56 88H42V108H28Z M42 64V77H54Q60 77 60 70.5Q60 64 54 64Z" fill="#343a40" fill-rule="evenodd"/></svg>
<span class="t" style="left:46.00px;top:533.00px;font-size:11.6px;line-height:11.6px;color:#c2c7d0;letter-spacing:0.044px;-webkit-text-stroke:.32px #c2c7d0;">Daftar Pelayanan</span>
<svg style="position:absolute;left:20.8px;top:566.5px;" width="18.4" height="12.8" viewBox="0 0 100 70" preserveAspectRatio="none"><circle cx="31" cy="19" r="17" fill="#c2c7d0"/><path d="M4 70V57.400000000000006Q4 42 21.55 42H40.45Q58 42 58 57.400000000000006V70Z" fill="#c2c7d0"/><circle cx="74" cy="22" r="13.5" fill="#c2c7d0"/><path d="M53 62V52.55Q53 41 66.65 41H81.35Q95 41 95 52.55V62Z" fill="#c2c7d0"/></svg>
<span class="t" style="left:46.00px;top:568.00px;font-size:11.6px;line-height:11.6px;color:#c2c7d0;letter-spacing:0.105px;-webkit-text-stroke:.32px #c2c7d0;">Komsel</span>
<svg style="position:absolute;left:23.5px;top:600px;" width="14" height="14" viewBox="0 0 100 100" preserveAspectRatio="none"><polygon points="50.0,0.0 62.6,19.5 85.4,14.6 80.5,37.4 100.0,50.0 80.5,62.6 85.4,85.4 62.6,80.5 50.0,100.0 37.4,80.5 14.6,85.4 19.5,62.6 0.0,50.0 19.5,37.4 14.6,14.6 37.4,19.5" fill="#c2c7d0"/><circle cx="50" cy="50" r="23" fill="#343a40"/><circle cx="50" cy="50" r="15.5" fill="#c2c7d0"/></svg>
<span class="t" style="left:46.00px;top:602.00px;font-size:11.6px;line-height:11.6px;color:#c2c7d0;letter-spacing:0.201px;-webkit-text-stroke:.32px #c2c7d0;">Talenta</span>
<div style="position:absolute;left:6px;top:630px;width:188px;height:1px;background:#4f5962;"></div>
<span class="t" style="left:15.90px;top:643.00px;font-size:11.9px;line-height:11.9px;color:#f1f2f3;letter-spacing:-0.122px;transform:scaleX(0.9109);transform-origin:0 0;-webkit-text-stroke:.42px #f1f2f3;">LAPORAN</span>
<svg style="position:absolute;left:23.5px;top:670.5px;" width="14" height="14.5" viewBox="0 0 14 14.5" preserveAspectRatio="none"><path d="M0.6 13.9V8.6Q0.6 7.5 1.7 7.5H12.3Q13.4 7.5 13.4 8.6V13.9Z" fill="#c2c7d0"/><path d="M0.6 10.6Q1.7 12 2.8 10.6T5 10.6T7.2 10.6T9.4 10.6T11.6 10.6T13.4 10.6" fill="none" stroke="#343a40" stroke-width="0.9"/><rect x="2.3" y="3.6" width="1.5" height="4.2" fill="#c2c7d0"/><path d="M3.05 0.2Q4.199999999999999 1.6 3.05 2.9Q1.9 1.6 3.05 0.2Z" fill="#c2c7d0"/><rect x="6.25" y="3.6" width="1.5" height="4.2" fill="#c2c7d0"/><path d="M7.0 0.2Q8.15 1.6 7.0 2.9Q5.85 1.6 7.0 0.2Z" fill="#c2c7d0"/><rect x="10.2" y="3.6" width="1.5" height="4.2" fill="#c2c7d0"/><path d="M10.95 0.2Q12.1 1.6 10.95 2.9Q9.799999999999999 1.6 10.95 0.2Z" fill="#c2c7d0"/></svg>
<span class="t" style="left:46.00px;top:672.00px;font-size:11.6px;line-height:11.6px;color:#c2c7d0;letter-spacing:0.139px;-webkit-text-stroke:.32px #c2c7d0;">Jemaat - Ulang Tahun</span>
<svg style="position:absolute;left:24px;top:705px;" width="13" height="15" viewBox="0 0 13 15" preserveAspectRatio="none"><rect x="0.3" y="0.3" width="11" height="14.4" rx="1.4" fill="#c2c7d0"/><rect x="11.4" y="1.6" width="1.4" height="3" rx=".4" fill="#c2c7d0"/><rect x="11.4" y="5.6" width="1.4" height="3" rx=".4" fill="#c2c7d0"/><rect x="11.4" y="9.6" width="1.4" height="3" rx=".4" fill="#c2c7d0"/><circle cx="5.8" cy="5.6" r="1.9" fill="#343a40"/><path d="M2.6 11.4Q2.6 8.4 5.8 8.4Q9 8.4 9 11.4Z" fill="#343a40"/></svg>
<span class="t" style="left:46.00px;top:707.00px;font-size:11.6px;line-height:11.6px;color:#c2c7d0;letter-spacing:0.037px;-webkit-text-stroke:.32px #c2c7d0;">Jemaat - Usia</span>
<div style="position:absolute;left:1349px;top:71px;width:17px;height:649px;background:#f1f1f1;"></div>
<div style="position:absolute;left:1351px;top:88px;width:13px;height:512px;background:#c1c1c1;"></div>
<svg style="position:absolute;left:1353px;top:77px;" width="9" height="6" viewBox="0 0 9 6" preserveAspectRatio="none"><path d="M0.5 5.5L4.5 1L8.5 5.5Z" fill="#a3a3a3"/></svg>
<svg style="position:absolute;left:1353px;top:708px;" width="9" height="6" viewBox="0 0 9 6" preserveAspectRatio="none"><path d="M0.5 0.5L4.5 5L8.5 0.5Z" fill="#505050"/></svg>
<div style="position:absolute;left:0;top:720px;width:1366px;height:48px;background:linear-gradient(90deg,#e2ebf8 0%,#e3edf9 16%,#d8e3f7 25%,#d4def5 50%,#d6e0f5 66%,#dfe7f6 76%,#e3ecf8 85%,#e2ebf7 100%)"></div>
<div style="position:absolute;left:0px;top:720px;width:1366px;height:1px;background:#c9d0db;"></div>
<svg style="position:absolute;left:20px;top:732.4px;" width="24" height="22" viewBox="0 0 24 22" preserveAspectRatio="none"><defs><radialGradient id="sunG" cx=".4" cy=".35" r=".7"><stop offset="0" stop-color="#ffc83d"/><stop offset="1" stop-color="#f08a1c"/></radialGradient><linearGradient id="clG" x1="0" y1="0" x2="0" y2="1"><stop offset="0" stop-color="#fdfdff"/><stop offset="1" stop-color="#c5d2ea"/></linearGradient></defs><circle cx="10.6" cy="10.6" r="10" fill="url(#sunG)"/><path d="M11.4 17.9A3.1 3.1 0 0 1 11.6 11.7A4.6 4.6 0 0 1 20 10.8A3.6 3.6 0 0 1 20.2 17.9Z" fill="url(#clG)" stroke="#aebbd4" stroke-width=".4"/></svg>
<span class="t" style="left:50.40px;top:730.00px;font-size:11.6px;line-height:11.6px;color:#1b1b1b;letter-spacing:-0.097px;transform:scaleX(0.9484);transform-origin:0 0;">33°C</span>
<span class="t" style="left:50.40px;top:746.00px;font-size:11.6px;line-height:11.6px;color:#505458;letter-spacing:-0.216px;">Cerah</span>
<svg style="position:absolute;left:340px;top:733px;" width="23" height="23" viewBox="0 0 23 23" preserveAspectRatio="none"><defs><linearGradient id="wG" x1="0" y1="0" x2="1" y2="1"><stop offset="0" stop-color="#37c1f7"/><stop offset="1" stop-color="#0a68cf"/></linearGradient></defs><path d="M0 0H11V11H0Z M12 0H23V11H12Z M0 12H11V23H0Z M12 12H23V23H12Z" fill="url(#wG)"/></svg>
<div style="position:absolute;left:376.8px;top:728.3px;width:219.2px;height:31.2px;border-radius:15.6px;background:#f0f4fc;border:1px solid #c3cce0;box-sizing:border-box"></div>
<svg style="position:absolute;left:387px;top:736px;" width="17" height="17" viewBox="0 0 17 17" preserveAspectRatio="none"><circle cx="7" cy="7" r="5.2" fill="none" stroke="#222" stroke-width="1.6"/><path d="M10.8 10.8L15 15" stroke="#222" stroke-width="1.9" stroke-linecap="round"/></svg>
<span class="t" style="left:412.80px;top:738.00px;font-size:13.4px;line-height:13.4px;color:#555;letter-spacing:-0.106px;transform:scaleX(0.9569);transform-origin:0 0;">Search</span>
<svg style="position:absolute;left:536px;top:724px;" width="64" height="40" viewBox="0 0 64 40" preserveAspectRatio="none"><defs><linearGradient id="owW" x1="0" y1="0" x2="1" y2="1"><stop offset="0" stop-color="#8d7b6c"/><stop offset=".55" stop-color="#b79a72"/><stop offset="1" stop-color="#e2ab5c"/></linearGradient><linearGradient id="owB" x1="0" y1="0" x2="1" y2="0"><stop offset="0" stop-color="#9a8a7c"/><stop offset=".45" stop-color="#7a6352"/><stop offset="1" stop-color="#5a3a28"/></linearGradient></defs><path d="M7.4 21.2Q13 24.6 20.5 25.4" fill="none" stroke="#9a8f8a" stroke-width="1.1"/><path d="M11.2 18.2Q14 22 19 24" fill="none" stroke="#a39994" stroke-width="1"/><path d="M14.8 15.4Q19 17.4 21 22" fill="none" stroke="#8d827c" stroke-width="1.2"/><path d="M19.4 21.4Q22.6 22.6 24 25.4L27.4 31.6L51.4 31.4Q50 33 46 33.4L25 33.8Q23.6 33.8 22.8 32L19.6 25.8Q18.8 24 18.6 22Z" fill="url(#owB)"/><path d="M27 14.6C26.6 20 30 26 36.4 30.6L45.6 31.2C41 28.4 36.6 22 34.8 15.4Z" fill="#f4f1ec"/><path d="M28.4 22C30.4 26 33.6 29 36.6 30.6L40 30.8C35.6 28 32.4 25 30.4 20.4Z" fill="#e4ded6" opacity=".7"/><path d="M35.2 16.8C38.6 14.4 43.4 17 47 21.8C49.6 25.2 51 28.6 50.8 30.6C48 31.4 43.4 29.6 39.8 25.8C36.8 22.6 35 19 35.2 16.8Z" fill="url(#owW)"/><path d="M45.6 31L51.6 31.2L47.4 29.4Z" fill="#9b9aa0"/><path d="M34 30.6L37.6 29.8L38.6 31.6L34.4 32Z" fill="#e9a53c"/><ellipse cx="32.2" cy="12.4" rx="5.9" ry="5.6" fill="#e8cfa9"/><ellipse cx="32.1" cy="12.9" rx="5.2" ry="4.9" fill="#fbf9f6"/><ellipse cx="29.8" cy="12" rx="1.05" ry="0.95" fill="#2a2630"/><ellipse cx="34.1" cy="12" rx="1.05" ry="0.95" fill="#2a2630"/><path d="M31.4 14.2L32.4 14.2L31.9 15.8Z" fill="#e6c9a2"/></svg>
<svg style="position:absolute;left:607px;top:733px;" width="25" height="23" viewBox="0 0 25 23" preserveAspectRatio="none"><defs><linearGradient id="tvA" x1="0" y1="0" x2="1" y2="1"><stop offset="0" stop-color="#ffffff"/><stop offset="1" stop-color="#d4d8dd"/></linearGradient><linearGradient id="tvB" x1="0" y1="0" x2="0" y2="1"><stop offset="0" stop-color="#3c3c3c"/><stop offset="1" stop-color="#0c0c0c"/></linearGradient></defs><rect x="6.8" y="0" width="17.6" height="15.2" rx="1.4" fill="url(#tvA)" stroke="#dfe3ea" stroke-width=".5"/><rect x="0.8" y="6" width="17.8" height="15.8" rx="1.4" fill="url(#tvB)"/><path d="M6.8 6H18.6V15.2H8.2Q6.8 15.2 6.8 13.8Z" fill="#b4b5b7" opacity=".92"/></svg>
<svg style="position:absolute;left:651px;top:732px;" width="24" height="24" viewBox="0 0 24 24" preserveAspectRatio="none"><defs><linearGradient id="chG" x1="0" y1="0" x2="1" y2="1"><stop offset="0" stop-color="#8b8ff5"/><stop offset="1" stop-color="#4a52c4"/></linearGradient></defs><path d="M12 0.6A11.2 11.2 0 1 1 6.4 21.6L1 23.4L2.6 18A11.2 11.2 0 0 1 12 0.6Z" fill="url(#chG)"/><rect x="5.2" y="7.6" width="9.4" height="8.4" rx="1.8" fill="#fff"/><path d="M15.4 10.6L19 8.2V15.4L15.4 13Z" fill="#fff"/></svg>
<svg style="position:absolute;left:696px;top:732px;" width="24" height="24" viewBox="0 0 24 24" preserveAspectRatio="none"><defs><radialGradient id="ffG" cx=".6" cy=".25" r=".9"><stop offset="0" stop-color="#ffe14a"/><stop offset=".45" stop-color="#ff8a1e"/><stop offset="1" stop-color="#f2274c"/></radialGradient><radialGradient id="ffP" cx=".5" cy=".4" r=".6"><stop offset="0" stop-color="#a35dff"/><stop offset="1" stop-color="#5b2fc0"/></radialGradient></defs><path d="M12 1.6C14 3 15 4.4 15.4 5.6C17 4.6 17.6 3 17.6 1.2C21.6 4 23.6 8.4 23.2 13C22.6 19.4 17.6 23.6 12 23.6C5.6 23.6 0.8 18.6 0.8 12.6C0.8 9.6 1.8 7.4 3.2 5.6C3.4 7 3.8 7.6 4.4 8.2C5 5.6 7.4 3.8 9.2 3.6C9 2.8 10 1.6 12 1.6Z" fill="url(#ffG)"/><circle cx="12.2" cy="13" r="6.2" fill="url(#ffP)"/><path d="M5.8 11.2C7.4 9.4 10.4 9.8 11.6 11.2C12.8 11.2 13.4 11.8 13.2 12.8C12.4 12.8 11.6 13.4 11.6 14.4C12.8 16 15.8 15.6 17 13.6C17.4 17.6 14.4 19.6 11.6 19.4C7.6 19.2 5 15.4 5.8 11.2Z" fill="#ff9a2e"/></svg>
<svg style="position:absolute;left:740px;top:732px;" width="25" height="24" viewBox="0 0 25 24" preserveAspectRatio="none"><path d="M1 7.4L3 5.6L18 17.4V23.2Z M1 16.6L3 18.4L18 6.6V0.8Z" fill="#0b6fb8"/><path d="M18 0.8L24.2 3.6V20.4L18 23.2Z" fill="#27a6f3"/><path d="M18 0.8L6.4 12L18 23.2V17.4L11.2 12L18 6.6Z" fill="#1488d6"/><path d="M1 7.4L3 5.6L8.6 10L6.4 12Z M1 16.6L3 18.4L8.6 14L6.4 12Z" fill="#0a66ab"/></svg>
<svg style="position:absolute;left:784px;top:733px;" width="25" height="22" viewBox="0 0 25 22" preserveAspectRatio="none"><path d="M0.6 2.2Q0.6 0.6 2.2 0.6H8.4L10.8 3H22.8Q24.4 3 24.4 4.6V8H0.6Z" fill="#e9a825"/><path d="M0.6 5.4H24.4V19.4Q24.4 21 22.8 21H2.2Q0.6 21 0.6 19.4Z" fill="#ffd75e"/><path d="M4.8 21V15.8Q4.8 14.4 6.2 14.4H18.8Q20.2 14.4 20.2 15.8V21Z" fill="#1d7fe0"/><rect x="8.4" y="17.4" width="8.2" height="1.7" rx=".8" fill="#0c4f9e"/></svg>
<div style="position:absolute;left:821.5px;top:725px;width:37.5px;height:38px;border-radius:4px;background:rgba(255,255,255,.62);box-shadow:0 0 0 .5px rgba(0,0,0,.04)"></div>
<svg style="position:absolute;left:828px;top:732px;" width="24" height="24" viewBox="0 0 24 24" preserveAspectRatio="none"><path d="M1.95 6.20A11.6 11.6 0 0 1 22.05 6.20L12 12Z" fill="#ea4335"/><path d="M22.05 6.20A11.6 11.6 0 0 1 12.00 23.60L12 12Z" fill="#fbbc04"/><path d="M12.00 23.60A11.6 11.6 0 0 1 1.95 6.20L12 12Z" fill="#34a853"/><path d="M12 6.2H22.05L22.05 6.20A11.6 11.6 0 0 0 1.95 6.20L7 9.1Z" fill="#ea4335"/><path d="M17 14.9L12.00 23.60A11.6 11.6 0 0 0 22.05 6.20H12Z" fill="#fbbc04" transform=""/><path d="M7 9.1L1.95 6.20A11.6 11.6 0 0 0 12.00 23.60L17 14.9L12 17.8Z" fill="#34a853"/><circle cx="12" cy="12" r="5.5" fill="#fff"/><circle cx="12" cy="12" r="4.3" fill="#4285f4"/></svg>
<svg style="position:absolute;left:872px;top:732px;" width="24.6" height="24.4" viewBox="0 0 24.6 24.4" preserveAspectRatio="none"><defs><linearGradient id="edA" x1="0" y1="0" x2=".4" y2="1"><stop offset="0" stop-color="#2aa7e6"/><stop offset="1" stop-color="#0c55a0"/></linearGradient><linearGradient id="edB" x1="0" y1="0" x2="1" y2=".2"><stop offset="0" stop-color="#2cb3ea"/><stop offset=".55" stop-color="#38c9b4"/><stop offset="1" stop-color="#62d444"/></linearGradient></defs><circle cx="12" cy="12" r="11.5" fill="url(#edA)"/><path d="M12 0.5C18.6 0.5 23.5 5.4 23.5 11C23.5 13.6 22.4 15.4 20.4 16H14.8C15.6 15 16 13.4 15.6 11.8C15 8.8 12.4 6.8 9.4 7C6.2 7.2 3.2 9.2 0.9 13.4C0.1 6.4 5.4 0.5 12 0.5Z" fill="url(#edB)"/><path d="M12.6 9.8C10.6 11.2 10.2 14.4 12.4 16.2C14.8 18.2 19.6 17.8 23.4 15.2L23.7 11.4C22.2 13.6 17.8 14.2 15.6 12.8C14.6 12.2 14.4 10.6 15 9.6C14.2 9.3 13.2 9.4 12.6 9.8Z" fill="#dde6f6"/><path d="M9.6 23.2C5.4 21.8 3.4 17.6 4.2 13.4C4.8 10.4 7 8.4 9.4 8C8.2 9.8 8 12.4 9 14.8C10.4 18.4 14.4 20.2 18.6 19C20 18.6 21 18 21.8 17.2C19.8 21.6 14.6 24.8 9.6 23.2Z" fill="#0e4f9a" opacity=".85"/></svg>
<svg style="position:absolute;left:916px;top:733px;" width="25" height="23" viewBox="0 0 25 23" preserveAspectRatio="none"><rect x="6" y="0.6" width="18.4" height="21.8" rx="1.4" fill="#41a5ee"/><rect x="6" y="6" width="18.4" height="5.6" fill="#2b7cd3"/><rect x="6" y="11.6" width="18.4" height="5.4" fill="#185abd"/><path d="M6 17H24.4V21Q24.4 22.4 23 22.4H7.4Q6 22.4 6 21Z" fill="#103f91"/><rect x="0.4" y="5.2" width="12.8" height="12.8" rx="1.2" fill="#185abd"/><path d="M2.6 8L4.3 15L6.8 8.6L9.3 15L11 8" fill="none" stroke="#fff" stroke-width="1.5" stroke-linejoin="miter"/></svg>
<svg style="position:absolute;left:960px;top:733px;" width="25" height="23" viewBox="0 0 25 23" preserveAspectRatio="none"><rect x="6" y="0.6" width="18.4" height="21.8" rx="1.4" fill="#21a366"/><rect x="15.2" y="0.6" width="9.2" height="5.6" fill="#33c481"/><rect x="6" y="6.2" width="9.2" height="5.4" fill="#107c41"/><rect x="15.2" y="6.2" width="9.2" height="5.4" fill="#21a366"/><rect x="6" y="11.6" width="18.4" height="5.4" fill="#185c37"/><rect x="15.2" y="11.6" width="9.2" height="5.4" fill="#107c41"/><path d="M6 17H24.4V21Q24.4 22.4 23 22.4H7.4Q6 22.4 6 21Z" fill="#185c37"/><rect x="0.4" y="5.2" width="12.8" height="12.8" rx="1.2" fill="#107c41"/><path d="M3.8 8.2L9.8 15M9.8 8.2L3.8 15" stroke="#fff" stroke-width="1.7"/></svg>
<svg style="position:absolute;left:1004px;top:732px;" width="24" height="24" viewBox="0 0 24 24" preserveAspectRatio="none"><defs><linearGradient id="ptG" x1="0" y1="0" x2="1" y2="1"><stop offset="0" stop-color="#52c6f3"/><stop offset="1" stop-color="#1f86d6"/></linearGradient></defs><path d="M11 1.4C16.6 1.4 20 4.8 20.4 9.6C20.6 13.4 18.6 15.4 16.2 15C14.2 14.6 12.8 15.8 13.2 17.6C13.6 19.4 12.8 21.2 10.2 21.2C5 21.2 1 17.2 1 11.4C1 5.6 5.4 1.4 11 1.4Z" fill="url(#ptG)"/><circle cx="6.6" cy="6.8" r="1.9" fill="#62b946"/><circle cx="11.8" cy="4.6" r="1.9" fill="#f6cf3e"/><circle cx="3.8" cy="12" r="1.9" fill="#e8683a"/><path d="M11.6 11V14.2M10 12.6H13.2" stroke="#eaf6ff" stroke-width="1"/><path d="M18.4 9.6H21.2V23.4H18.4Z" fill="#a8672e"/><path d="M17.8 3Q19.8 0.6 21.8 3V8.8H17.8Z" fill="#efe4cd"/><rect x="17.8" y="8.4" width="4" height="2" fill="#8f8f92"/></svg>
<div style="position:absolute;left:749px;top:760px;width:6px;height:2.6px;border-radius:1.5px;background:#858a93"></div>
<div style="position:absolute;left:793px;top:760px;width:6px;height:2.6px;border-radius:1.5px;background:#858a93"></div>
<div style="position:absolute;left:1013px;top:760px;width:6px;height:2.6px;border-radius:1.5px;background:#858a93"></div>
<div style="position:absolute;left:833px;top:760px;width:14.5px;height:3px;border-radius:1.5px;background:#0a67c4"></div>
<svg style="position:absolute;left:1150px;top:740px;" width="12" height="8" viewBox="0 0 12 8" preserveAspectRatio="none"><path d="M1 7L6 1.8L11 7" fill="none" stroke="#1b1b1b" stroke-width="1.4"/></svg>
<svg style="position:absolute;left:1180px;top:737.5px;" width="16" height="12" viewBox="0 0 16 12" preserveAspectRatio="none"><path d="M0.8 4.4A10.4 10.4 0 0 1 15.2 4.4" fill="none" stroke="#9aa0aa" stroke-width="1.15"/><path d="M3 6.8A7.2 7.2 0 0 1 13 6.8" fill="none" stroke="#1b1b1b" stroke-width="1.2"/><path d="M5.3 9A4 4 0 0 1 10.7 9" fill="none" stroke="#1b1b1b" stroke-width="1.2"/><circle cx="8" cy="10.7" r="1.1" fill="#1b1b1b"/></svg>
<svg style="position:absolute;left:1203.5px;top:737px;" width="17" height="13" viewBox="0 0 17 13" preserveAspectRatio="none"><path d="M0.8 4.6H3.2L6.6 1.4V11.6L3.2 8.4H0.8Z" fill="none" stroke="#1b1b1b" stroke-width="1.1" stroke-linejoin="round"/><path d="M8.6 4.2A3.4 3.4 0 0 1 8.6 8.8" fill="none" stroke="#1b1b1b" stroke-width="1.1"/><path d="M10.8 2.4A6 6 0 0 1 10.8 10.6" fill="none" stroke="#a9aeb8" stroke-width="1"/><path d="M13 0.8A8.6 8.6 0 0 1 13 12.2" fill="none" stroke="#c3c8d2" stroke-width="1"/></svg>
<svg style="overflow:visible;position:absolute;left:1227.5px;top:736.5px;" width="18" height="13" viewBox="0 0 18 13" preserveAspectRatio="none"><rect x="1.2" y="3.6" width="13.6" height="8" rx="1.8" fill="none" stroke="#1b1b1b" stroke-width="1.1"/><rect x="2.8" y="5.2" width="10.4" height="4.8" rx=".8" fill="#1b1b1b"/><path d="M15.6 6.2Q16.8 6.4 16.8 7.6Q16.8 8.8 15.6 9Z" fill="#1b1b1b"/><path d="M4.6 -0.6L0.6 5.4H3L1.8 9.6L6.6 3.4H4Z" fill="#1b1b1b" stroke="#e2eaf7" stroke-width=".9" stroke-linejoin="round"/></svg>
<span class="t" style="left:1293.84px;top:730.00px;font-size:11.6px;line-height:11.6px;color:#1b1b1b;letter-spacing:-0.063px;">13:05</span>
<span class="t" style="left:1261.36px;top:746.00px;font-size:11.6px;line-height:11.6px;color:#1b1b1b;letter-spacing:0.357px;">19/03/2023</span>
<div style="position:absolute;left:1330.4px;top:736.4px;width:15.2px;height:15.2px;border-radius:8px;background:#0567c1"></div>
<span class="t" style="left:1334.82px;top:740.00px;font-size:10px;line-height:10px;color:#fff;font-weight:700;">1</span>
</body></html>
